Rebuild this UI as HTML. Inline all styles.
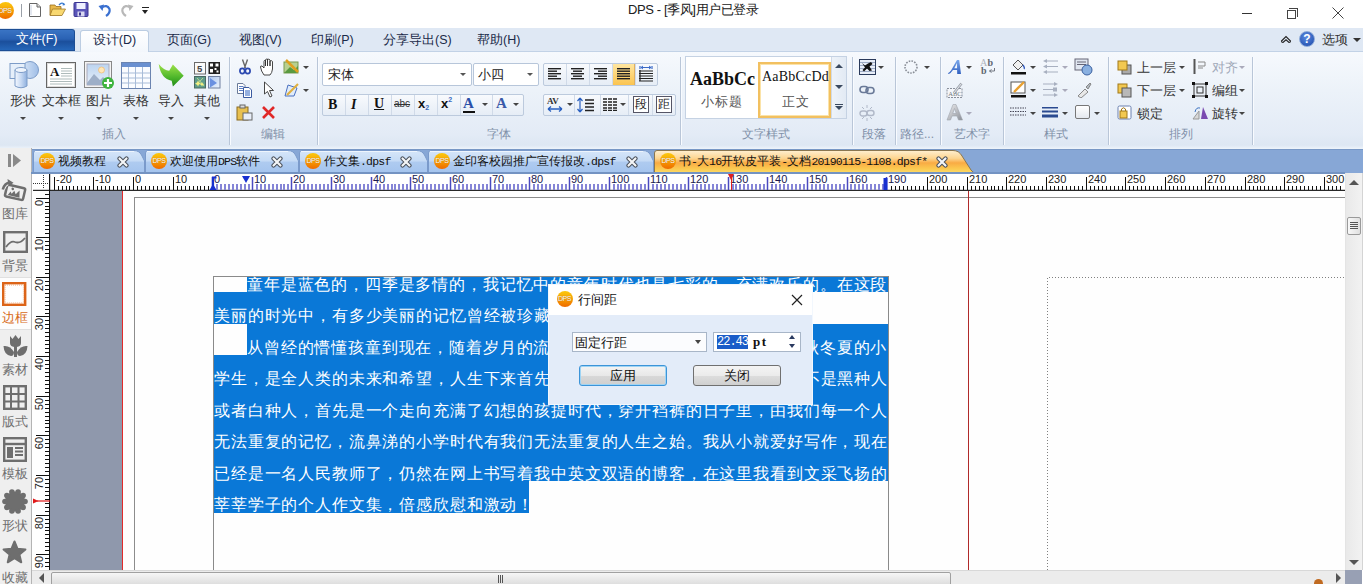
<!DOCTYPE html><html><head><meta charset="utf-8"><style>
html,body{margin:0;padding:0;}
body{width:1363px;height:584px;overflow:hidden;position:relative;background:#fff;font-family:"Liberation Sans",sans-serif;font-size:12px;color:#222;}
div,svg{box-sizing:border-box;}
.a{position:absolute;}
.lbl{position:absolute;color:#8090a8;font-size:12px;line-height:14px;white-space:nowrap;}
.rt{position:absolute;font-size:12px;line-height:14px;color:#2a2a2a;white-space:nowrap;}
.sep{position:absolute;top:57px;width:2px;height:88px;border-left:1px solid #b9c6d8;border-right:1px solid #f8fbff;}
.dd{position:absolute;width:0;height:0;border-left:3px solid transparent;border-right:3px solid transparent;border-top:3px solid #444;}
.ddg{position:absolute;width:0;height:0;border-left:3px solid transparent;border-right:3px solid transparent;border-top:3px solid #aab;}
</style></head><body>
<div style="position:absolute;left:-3.5px;top:1.5px;width:17.0px;height:17.0px;border-radius:50%;background:linear-gradient(#fbc70c 0%,#f8a808 45%,#f28400 75%,#ee6a00 100%);color:#fff;font-size:7px;line-height:17.0px;text-align:center;font-family:'Liberation Sans',sans-serif;letter-spacing:-0.4px;text-shadow:0 0 1px #a85a00">DPS</div>
<div style="position:absolute;left:21px;top:4px;width:1px;height:13px;background:#9aa0a8"></div>
<svg class="a" style="left:28px;top:2px" width="14" height="16" viewBox="0 0 14 16">
<path d="M1.5 1.5 H9 L12.5 5 V14.5 H1.5 Z" fill="#fff" stroke="#666" stroke-width="1"/>
<path d="M9 1.5 V5 H12.5" fill="#ddd" stroke="#666" stroke-width="1"/>
<path d="M3 3 V13" stroke="#c8d0e0" stroke-width="1"/></svg>
<svg class="a" style="left:49px;top:1px" width="18" height="16" viewBox="0 0 18 16">
<path d="M1 4 H6 L7 5.5 H12 V14 H1 Z" fill="#e8b84a" stroke="#9a7020" stroke-width="0.8"/>
<path d="M3.5 8 H16.5 L13 14.5 H1 Z" fill="#f8d870" stroke="#a07a28" stroke-width="0.8"/>
<path d="M10 4 Q13 0.5 15.5 3.5" fill="none" stroke="#3a7ad0" stroke-width="1.3"/>
<path d="M14 1.8 L16.3 4 L13.6 4.6 Z" fill="#3a7ad0"/></svg>
<svg class="a" style="left:73px;top:2px" width="16" height="15" viewBox="0 0 16 15">
<rect x="1" y="0.5" width="14" height="14" rx="1" fill="#5a55b8" stroke="#3a3590"/>
<rect x="3.5" y="1" width="9" height="6" fill="#eef0ff"/>
<rect x="4.5" y="9.5" width="7" height="5" fill="#d8d8f0"/>
<rect x="6" y="10.5" width="2" height="3" fill="#3a3590"/></svg>
<svg class="a" style="left:98px;top:3px" width="14" height="14" viewBox="0 0 14 14">
<path d="M3.5 4.5 Q9 1 11.5 6 Q12.5 10 8 13" fill="none" stroke="#3a70d0" stroke-width="2.2"/>
<path d="M0.5 3 L6 1.5 L4.5 8 Z" fill="#3a70d0"/></svg>
<svg class="a" style="left:120px;top:3px" width="14" height="14" viewBox="0 0 14 14">
<path d="M10.5 4.5 Q5 1 2.5 6 Q1.5 10 6 13" fill="none" stroke="#b8b8b8" stroke-width="2.2"/>
<path d="M13.5 3 L8 1.5 L9.5 8 Z" fill="#b8b8b8"/></svg>
<div style="position:absolute;left:142px;top:7px;width:7px;height:1px;background:#222"></div>
<div class="a" style="left:142px;top:10px;width:0;height:0;border-left:3.5px solid transparent;border-right:3.5px solid transparent;border-top:4px solid #222"></div>
<div style="position:absolute;left:628px;top:2px;white-space:nowrap;font-size:13px;line-height:16px;color:#202020;letter-spacing:-0.4px">DPS - [季风]用户已登录</div>
<div style="position:absolute;left:1242px;top:13px;width:10px;height:1px;background:#333"></div>
<div style="position:absolute;left:1287px;top:10px;width:9px;height:9px;border:1px solid #444"></div>
<div style="position:absolute;left:1289px;top:8px;width:9px;height:9px;border-top:1px solid #444;border-right:1px solid #444"></div>
<svg class="a" style="left:1332px;top:7px" width="12" height="12" viewBox="0 0 12 12"><path d="M0.5 0.5 L11.5 11.5 M11.5 0.5 L0.5 11.5" stroke="#444" stroke-width="1"/></svg>
<div style="position:absolute;left:0px;top:28px;width:1363px;height:24px;background:#dfe8f4"></div>
<div style="position:absolute;left:0px;top:51px;width:1363px;height:1px;background:#c2d2e6"></div>
<div class="a" style="left:0;top:29px;width:75px;height:22px;border-radius:0 3px 0 0;background:linear-gradient(#3a74c4 0%,#2a62b4 45%,#1b4f9c 58%,#2566b8 100%);border:1px solid #1d4e94;border-left:none;color:#fff;font-size:12.5px;line-height:19px;text-align:center;padding-right:1px">文件(F)</div>
<div class="a" style="left:80px;top:30px;width:69px;height:22px;border-radius:3px 3px 0 0;background:linear-gradient(#ffffff,#f3f7fc);border:1px solid #bccde2;border-bottom:none;color:#1a2a48;font-size:12.5px;line-height:19px;text-align:center">设计(D)</div>
<div style="position:absolute;left:167px;top:33px;white-space:nowrap;font-size:12.5px;line-height:15px;color:#1a2a48">页面(G)</div>
<div style="position:absolute;left:239px;top:33px;white-space:nowrap;font-size:12.5px;line-height:15px;color:#1a2a48">视图(V)</div>
<div style="position:absolute;left:311px;top:33px;white-space:nowrap;font-size:12.5px;line-height:15px;color:#1a2a48">印刷(P)</div>
<div style="position:absolute;left:383px;top:33px;white-space:nowrap;font-size:12.5px;line-height:15px;color:#1a2a48">分享导出(S)</div>
<div style="position:absolute;left:477px;top:33px;white-space:nowrap;font-size:12.5px;line-height:15px;color:#1a2a48">帮助(H)</div>
<svg class="a" style="left:1280px;top:34px" width="12" height="10" viewBox="0 0 12 10"><path d="M1.5 7 L6 2.5 L10.5 7 Q10.5 8.5 9 8.5 L6 5.8 L3 8.5 Q1.5 8.5 1.5 7 Z" fill="none" stroke="#222" stroke-width="1.1"/></svg>
<div class="a" style="left:1299px;top:31px;width:16px;height:16px;border-radius:50%;background:radial-gradient(circle at 45% 35%,#5b8be0,#1a46a8);border:1px solid #8aa8d8;color:#fff;font-weight:bold;font-size:12px;line-height:15px;text-align:center">?</div>
<div style="position:absolute;left:1322px;top:32px;white-space:nowrap;font-size:13px;line-height:16px;color:#333">选项</div>
<div class="dd" style="left:1353px;top:38px;border-top-color:#333;border-left-width:4px;border-right-width:4px;border-top-width:4px"></div>
<div style="position:absolute;left:0px;top:52px;width:1363px;height:97px;background:linear-gradient(#f6f9fd 0%,#ecf2f9 40%,#e3ebf6 85%,#dde7f3 96%,#eef4fb 100%)"></div>
<div class="sep" style="left:229px"></div>
<div class="sep" style="left:317px"></div>
<div class="sep" style="left:680px"></div>
<div class="sep" style="left:852px"></div>
<div class="sep" style="left:895px"></div>
<div class="sep" style="left:940px"></div>
<div class="sep" style="left:1003px"></div>
<div class="sep" style="left:1108px"></div>
<div class="sep" style="left:1252px"></div>
<div class="lbl" style="left:102.0px;top:127px;width:24px;text-align:center">插入</div>
<div class="lbl" style="left:261.0px;top:127px;width:24px;text-align:center">编辑</div>
<div class="lbl" style="left:487.0px;top:127px;width:24px;text-align:center">字体</div>
<div class="lbl" style="left:742.0px;top:127px;width:48px;text-align:center">文字样式</div>
<div class="lbl" style="left:862.0px;top:127px;width:24px;text-align:center">段落</div>
<div class="lbl" style="left:900.0px;top:127px;width:34px;text-align:center">路径...</div>
<div class="lbl" style="left:954.0px;top:127px;width:36px;text-align:center">艺术字</div>
<div class="lbl" style="left:1044.0px;top:127px;width:24px;text-align:center">样式</div>
<div class="lbl" style="left:1169.0px;top:127px;width:24px;text-align:center">排列</div>
<svg class="a" style="left:9px;top:60px" width="30" height="30" viewBox="0 0 30 30">
<defs><linearGradient id="gs1" x1="0" x2="1"><stop offset="0" stop-color="#dbe8f8"/><stop offset="1" stop-color="#9fbde6"/></linearGradient>
<linearGradient id="gs2" x1="0" x2="1"><stop offset="0" stop-color="#f4f8ff"/><stop offset="0.5" stop-color="#c8daf3"/><stop offset="1" stop-color="#8fb0de"/></linearGradient></defs>
<circle cx="21" cy="10" r="8.5" fill="url(#gs1)" stroke="#7d9cc8"/>
<rect x="1" y="3.5" width="15" height="15" fill="#e6effa" stroke="#7d9cc8"/>
<path d="M6 10 V26 Q12 29.5 18 26 V10" fill="url(#gs2)" stroke="#7d9cc8"/>
<ellipse cx="12" cy="10" rx="6" ry="2.5" fill="#eef4fc" stroke="#7d9cc8"/></svg>
<svg class="a" style="left:46px;top:62px" width="30" height="27" viewBox="0 0 30 27">
<rect x="0.5" y="0.5" width="29" height="25" fill="#fff" stroke="#666"/>
<rect x="1.5" y="1.5" width="27" height="23" fill="none" stroke="#ddd"/>
<text x="4" y="14" font-family="Liberation Serif" font-size="13" font-weight="bold" fill="#111">A</text>
<path d="M15 6.5 H26 M15 9 H26 M15 11.5 H26 M15 14 H26 M4 17 H26 M4 19.5 H26 M4 22 H26" stroke="#9aa" stroke-width="0.8"/></svg>
<svg class="a" style="left:84px;top:61px" width="31" height="29" viewBox="0 0 31 29">
<defs><linearGradient id="gp" x1="0" y1="0" x2="0" y2="1"><stop offset="0" stop-color="#bcd4f0"/><stop offset="1" stop-color="#e8f0fa"/></linearGradient></defs>
<rect x="0.5" y="0.5" width="27" height="26" fill="#f4f4f4" stroke="#888"/>
<rect x="3" y="3" width="22" height="21" fill="url(#gp)" stroke="#aab"/>
<circle cx="17.5" cy="9" r="3" fill="#ffe7b8" stroke="#f0b060" stroke-width="0.6"/>
<path d="M3 22 L10 13 L16 19 L19 16 L25 22 V24 H3 Z" fill="#9eafc8"/>
<circle cx="24" cy="22" r="6" fill="#3eb43e"/>
<path d="M24 18 V26 M20 22 H28" stroke="#fff" stroke-width="2.2"/></svg>
<svg class="a" style="left:121px;top:62px" width="30" height="27" viewBox="0 0 30 27">
<rect x="0.5" y="0.5" width="29" height="26" fill="#fafcff" stroke="#6b84b0"/>
<rect x="1" y="1" width="28" height="4" fill="#6a90d0"/>
<path d="M1 11 H29 M1 16 H29 M1 21 H29 M7.5 5 V26 M14.5 5 V26 M21.5 5 V26" stroke="#a8bcd8" stroke-width="1"/></svg>
<svg class="a" style="left:155px;top:56px" width="32" height="34" viewBox="0 0 32 34">
<defs><linearGradient id="ga" x1="0" y1="0" x2="0" y2="1"><stop offset="0" stop-color="#9ee24a"/><stop offset="0.6" stop-color="#4cb52a"/><stop offset="1" stop-color="#1f8a18"/></linearGradient></defs>
<path d="M3.7 8 Q9 14.5 14.2 14.8 L17.9 8.6 L28.7 19.8 L17.9 30.6 L16.7 24.7 Q6 23 3.7 8 Z" fill="url(#ga)"/></svg>
<svg class="a" style="left:193px;top:61px" width="28" height="28" viewBox="0 0 28 28">
<defs><linearGradient id="gpl" x1="0" y1="0" x2="1" y2="1"><stop offset="0" stop-color="#a8c4f0"/><stop offset="1" stop-color="#eef4fc"/></linearGradient></defs>
<rect x="1.5" y="1.5" width="11" height="11.5" fill="#fafafa" stroke="#6a6a6a"/><text x="4" y="11" font-size="9.5" font-weight="bold" font-family="Liberation Sans" fill="#444">5</text>
<rect x="15.5" y="1" width="11.5" height="12" fill="#222"/>
<path d="M17 2.5 h3 v3 h-3z M22.5 2.5 h3 v3 h-3z M17 8 h3 v3.5 h-3z M21.5 7 h2 v2 h-2z M23.5 9.5 h2 v2 h-2z" fill="#fff"/>
<rect x="1.5" y="15.5" width="11" height="11.5" fill="#5e9c8a" stroke="#4a6a60"/><path d="M4 17 L11 25 M10 17 L3.5 24" stroke="#b8d890" stroke-width="1"/>
<path d="M5 19.5 l1 2 2 1 -2 1 -1 2 -1 -2 -2 -1 2 -1z M9 21 l0.8 1.5 1.5 0.8 -1.5 0.8 -0.8 1.5 -0.8 -1.5 -1.5 -0.8 1.5 -0.8z" fill="#f4f080"/>
<rect x="15.5" y="15.5" width="11.5" height="11.5" fill="url(#gpl)" stroke="#7080a0"/><path d="M17 17 L24 22 L17 26.5 Z" fill="#6a90e0"/></svg>
<div class="rt" style="left:10.0px;top:93px;width:26px;text-align:center;font-size:13px;line-height:15px;color:#333">形状</div>
<div class="dd" style="left:20px;top:117px"></div>
<div class="rt" style="left:41.5px;top:93px;width:39px;text-align:center;font-size:13px;line-height:15px;color:#333">文本框</div>
<div class="dd" style="left:58px;top:117px"></div>
<div class="rt" style="left:86.0px;top:93px;width:26px;text-align:center;font-size:13px;line-height:15px;color:#333">图片</div>
<div class="dd" style="left:96px;top:117px"></div>
<div class="rt" style="left:123.0px;top:93px;width:26px;text-align:center;font-size:13px;line-height:15px;color:#333">表格</div>
<div class="dd" style="left:133px;top:117px"></div>
<div class="rt" style="left:158.0px;top:93px;width:26px;text-align:center;font-size:13px;line-height:15px;color:#333">导入</div>
<div class="dd" style="left:168px;top:117px"></div>
<div class="rt" style="left:194.0px;top:93px;width:26px;text-align:center;font-size:13px;line-height:15px;color:#333">其他</div>
<div class="dd" style="left:204px;top:117px"></div>
<svg class="a" style="left:238px;top:59px" width="14" height="16" viewBox="0 0 14 16">
<path d="M4.5 0.5 L7.5 9 M9.5 0.5 L6.5 9" stroke="#666" stroke-width="1.4"/>
<ellipse cx="4.3" cy="12" rx="2.4" ry="2.6" fill="none" stroke="#2a48b0" stroke-width="1.7"/><ellipse cx="9.7" cy="12" rx="2.4" ry="2.6" fill="none" stroke="#2a48b0" stroke-width="1.7"/></svg>
<svg class="a" style="left:259px;top:58px" width="18" height="18" viewBox="0 0 18 18">
<path d="M5 17 Q2 13 1.5 9 Q1.5 7.5 3 8 L5 10 V3.5 Q5 2 6.5 2.5 V8 V2 Q7 0.5 8.5 1 V8 V1.5 Q10 0.5 11 2 V8 V3 Q12.5 2 13.5 3.5 V11 Q13 15 11 17 Z" fill="#fff" stroke="#333" stroke-width="0.9"/></svg>
<svg class="a" style="left:283px;top:59px" width="17" height="16" viewBox="0 0 17 16">
<rect x="1" y="3" width="14" height="11" fill="#b8d090" stroke="#7a9a50"/><path d="M1 14 L7 8 L11 11 L15 7 V14Z" fill="#5a9a40"/>
<path d="M3 1 L15 13" stroke="#e0a020" stroke-width="2.5"/></svg>
<div class="dd" style="left:303px;top:66px"></div>
<svg class="a" style="left:236px;top:82px" width="17" height="16" viewBox="0 0 17 16">
<path d="M1.5 1.5 H7 L9 3.5 V11.5 H1.5 Z" fill="#fff" stroke="#6a7a98"/><path d="M3 4.5 H7.5 M3 6.5 H7.5 M3 8.5 H7.5" stroke="#4a70c0" stroke-width="0.9"/>
<path d="M7.5 5.5 H13 L15.5 8 V15.5 H7.5 Z" fill="#fff" stroke="#3a5aa0"/><path d="M9 9 H14 M9 11 H14 M9 13 H14" stroke="#2a60c0" stroke-width="1"/></svg>
<svg class="a" style="left:263px;top:81px" width="12" height="17" viewBox="0 0 12 17">
<path d="M1.5 1 V13 L4.5 10.5 L7 16 L9 15 L6.5 9.5 L10.5 9.5 Z" fill="#fff" stroke="#333" stroke-width="0.9"/></svg>
<svg class="a" style="left:283px;top:82px" width="17" height="16" viewBox="0 0 17 16">
<path d="M2 14 L5 3 L14 6 L11 14 Z" fill="#e0ecfa" stroke="#4a70c0"/><path d="M4 13 L15 2" stroke="#e0b040" stroke-width="2.2"/></svg>
<div class="dd" style="left:303px;top:89px"></div>
<svg class="a" style="left:236px;top:104px" width="17" height="17" viewBox="0 0 17 17">
<rect x="1" y="3" width="11" height="13" fill="#e8c050" stroke="#8a6a20"/><rect x="4" y="1" width="5" height="3" fill="#ddd" stroke="#666"/>
<rect x="7" y="9" width="9" height="7" fill="#e8eef8" stroke="#666"/></svg>
<svg class="a" style="left:261px;top:105px" width="15" height="15" viewBox="0 0 15 15"><path d="M2 2 L13 13 M13 2 L2 13" stroke="#e02828" stroke-width="2.6"/></svg>
<div class="a" style="left:322px;top:63px;width:150px;height:23px;background:#fff;border:1px solid #b7c6da;border-radius:2px"></div>
<div style="position:absolute;left:328px;top:67px;white-space:nowrap;font-size:13px;line-height:15px;color:#222">宋体</div>
<div class="dd" style="left:460px;top:73px;border-top-color:#555"></div>
<div class="a" style="left:473px;top:63px;width:66px;height:23px;background:#fff;border:1px solid #b7c6da;border-radius:2px"></div>
<div style="position:absolute;left:478px;top:67px;white-space:nowrap;font-size:13px;line-height:15px;color:#222">小四</div>
<div class="dd" style="left:527px;top:73px;border-top-color:#555"></div>
<div class="a" style="left:322px;top:94px;width:202px;height:22px;background:linear-gradient(#f8fafd,#e6edf6);border:1px solid #bccadd;border-radius:2px"></div>
<div style="position:absolute;left:345px;top:95px;width:1px;height:20px;background:#d0dae8"></div>
<div style="position:absolute;left:368px;top:95px;width:1px;height:20px;background:#d0dae8"></div>
<div style="position:absolute;left:391px;top:95px;width:1px;height:20px;background:#d0dae8"></div>
<div style="position:absolute;left:414px;top:95px;width:1px;height:20px;background:#d0dae8"></div>
<div style="position:absolute;left:437px;top:95px;width:1px;height:20px;background:#d0dae8"></div>
<div style="position:absolute;left:460px;top:95px;width:1px;height:20px;background:#d0dae8"></div>
<div style="position:absolute;left:492px;top:95px;width:1px;height:20px;background:#d0dae8"></div>
<div style="position:absolute;left:328px;top:96px;white-space:nowrap;font-family:'Liberation Serif',serif;font-weight:bold;font-size:14px;line-height:17px;color:#111">B</div>
<div style="position:absolute;left:351px;top:96px;white-space:nowrap;font-family:'Liberation Serif',serif;font-style:italic;font-weight:bold;font-size:14px;line-height:17px;color:#111">I</div>
<div style="position:absolute;left:374px;top:95px;white-space:nowrap;font-family:'Liberation Serif',serif;font-weight:bold;font-size:14px;line-height:17px;color:#111;text-decoration:underline">U</div>
<div style="position:absolute;left:394px;top:98px;white-space:nowrap;font-family:'Liberation Sans',sans-serif;font-size:10px;line-height:12px;color:#333;text-decoration:line-through">abc</div>
<div style="position:absolute;left:418px;top:97px;white-space:nowrap;font-weight:bold;font-size:13px;line-height:14px;color:#111">x<span style='font-size:7px;color:#3a6ac0;vertical-align:-2px'>2</span></div>
<div style="position:absolute;left:441px;top:97px;white-space:nowrap;font-weight:bold;font-size:13px;line-height:14px;color:#111">x<span style='font-size:7px;color:#3a6ac0;position:relative;top:-6px'>2</span></div>
<div style="position:absolute;left:463px;top:95px;white-space:nowrap;font-family:'Liberation Serif',serif;font-weight:bold;font-size:15px;line-height:16px;color:#2a50a8">A</div>
<div style="position:absolute;left:463px;top:111px;width:12px;height:2px;background:#111"></div>
<div class="dd" style="left:482px;top:103px"></div>
<div style="position:absolute;left:496px;top:95px;white-space:nowrap;font-family:'Liberation Serif',serif;font-weight:bold;font-size:15px;line-height:17px;color:#3a5aa8">A</div>
<div class="dd" style="left:513px;top:103px"></div>
<div class="a" style="left:543px;top:63px;width:115px;height:23px;background:linear-gradient(#f8fafd,#e6edf6);border:1px solid #bccadd;border-radius:2px"></div>
<div style="position:absolute;left:612px;top:64px;width:23px;height:21px;background:linear-gradient(#ffe6a0,#fbc450);border-left:1px solid #e0b060;border-right:1px solid #e0b060"></div>
<div style="position:absolute;left:566px;top:64px;width:1px;height:21px;background:#d0dae8"></div>
<div style="position:absolute;left:589px;top:64px;width:1px;height:21px;background:#d0dae8"></div>
<div style="position:absolute;left:612px;top:64px;width:1px;height:21px;background:#d0dae8"></div>
<div style="position:absolute;left:635px;top:64px;width:1px;height:21px;background:#d0dae8"></div>
<svg class="a" style="left:548px;top:68px" width="14" height="13" viewBox="0 0 14 13"><rect x="0" y="0.0" width="13" height="1.4" fill="#222"/><rect x="0" y="2.5" width="9" height="1.4" fill="#222"/><rect x="0" y="5.0" width="13" height="1.4" fill="#222"/><rect x="0" y="7.5" width="9" height="1.4" fill="#222"/><rect x="0" y="10.0" width="13" height="1.4" fill="#222"/></svg>
<svg class="a" style="left:571px;top:68px" width="14" height="13" viewBox="0 0 14 13"><rect x="0" y="0.0" width="13" height="1.4" fill="#222"/><rect x="2" y="2.5" width="9" height="1.4" fill="#222"/><rect x="0" y="5.0" width="13" height="1.4" fill="#222"/><rect x="2" y="7.5" width="9" height="1.4" fill="#222"/><rect x="0" y="10.0" width="13" height="1.4" fill="#222"/></svg>
<svg class="a" style="left:594px;top:68px" width="14" height="13" viewBox="0 0 14 13"><rect x="0" y="0.0" width="13" height="1.4" fill="#222"/><rect x="4" y="2.5" width="9" height="1.4" fill="#222"/><rect x="0" y="5.0" width="13" height="1.4" fill="#222"/><rect x="4" y="7.5" width="9" height="1.4" fill="#222"/><rect x="0" y="10.0" width="13" height="1.4" fill="#222"/></svg>
<svg class="a" style="left:617px;top:68px" width="14" height="13" viewBox="0 0 14 13"><rect x="0" y="0.0" width="13" height="1.4" fill="#222"/><rect x="0" y="2.5" width="13" height="1.4" fill="#222"/><rect x="0" y="5.0" width="13" height="1.4" fill="#222"/><rect x="0" y="7.5" width="13" height="1.4" fill="#222"/><rect x="0" y="10.0" width="13" height="1.4" fill="#222"/></svg>
<svg class="a" style="left:638px;top:65px" width="16" height="17" viewBox="0 0 16 17">
<path d="M2 1 V4 M14 1 V4 M3 2.5 H13" stroke="#3a6ac8" stroke-width="1.2"/><path d="M3 2.5 L5 1 M3 2.5 L5 4 M13 2.5 L11 1 M13 2.5 L11 4" stroke="#3a6ac8" stroke-width="1"/>
<path d="M1 6 H15 M1 8.5 H15 M1 11 H15 M1 13.5 H15 M1 16 H15 M2 5 V16" stroke="#222" stroke-width="1.2"/></svg>
<div class="a" style="left:543px;top:94px;width:133px;height:22px;background:linear-gradient(#f8fafd,#e6edf6);border:1px solid #bccadd;border-radius:2px"></div>
<div style="position:absolute;left:574px;top:95px;width:1px;height:20px;background:#d0dae8"></div>
<div style="position:absolute;left:600px;top:95px;width:1px;height:20px;background:#d0dae8"></div>
<div style="position:absolute;left:628px;top:95px;width:1px;height:20px;background:#d0dae8"></div>
<div style="position:absolute;left:652px;top:95px;width:1px;height:20px;background:#d0dae8"></div>
<svg class="a" style="left:546px;top:96px" width="20" height="18" viewBox="0 0 20 18">
<text x="1" y="8" font-family="Liberation Serif" font-weight="bold" font-size="9" fill="#333">AV</text>
<path d="M2 13 H16 M2 13 L5 10.5 M2 13 L5 15.5 M16 13 L13 10.5 M16 13 L13 15.5" stroke="#2a60c0" stroke-width="1.3" fill="none"/></svg>
<div class="dd" style="left:567px;top:103px"></div>
<svg class="a" style="left:577px;top:96px" width="18" height="18" viewBox="0 0 18 18">
<path d="M3 2 V16 M3 2 L0.5 5 M3 2 L5.5 5 M3 16 L0.5 13 M3 16 L5.5 13" stroke="#2a60c0" stroke-width="1.2" fill="none"/>
<path d="M8 4 H17 M8 7.5 H17 M8 11 H17 M8 14.5 H17" stroke="#222" stroke-width="1.3"/></svg>
<svg class="a" style="left:603px;top:98px" width="14" height="13" viewBox="0 0 14 13">
<path d="M0 1 H14 M0 4 H14 M0 7 H14 M0 10 H14 M0 12.5 H14" stroke="#222" stroke-width="1.3"/><path d="M4.5 0 V13 M9.5 0 V13" stroke="#f2f5fa" stroke-width="1"/></svg>
<div class="dd" style="left:620px;top:103px"></div>
<div class="a" style="left:633px;top:96px;width:16px;height:17px;border:1px solid #556;background:#fff;font-size:12px;line-height:15px;text-align:center;color:#222">段</div>
<div class="a" style="left:656px;top:96px;width:16px;height:17px;border:1px solid #556;background:#fff;font-size:12px;line-height:15px;text-align:center;color:#222">距</div>
<div class="a" style="left:685px;top:56px;width:162px;height:63px;background:#fff;border:1px solid #c5d2e3"></div>
<div style="position:absolute;left:831px;top:57px;width:15px;height:61px;background:linear-gradient(90deg,#eef3f9,#e2eaf4);border-left:1px solid #d0dae8"></div>
<div class="a" style="left:835px;top:64px;width:0;height:0;border-left:4px solid transparent;border-right:4px solid transparent;border-bottom:4px solid #3a4a60"></div>
<div class="dd" style="left:835px;top:85px;border-left-width:4px;border-right-width:4px;border-top-width:4px;border-top-color:#3a4a60"></div>
<div style="position:absolute;left:835px;top:104px;width:8px;height:1px;background:#3a4a60"></div>
<div class="dd" style="left:835px;top:106px;border-left-width:4px;border-right-width:4px;border-top-width:4px;border-top-color:#3a4a60"></div>
<div style="position:absolute;left:690px;top:69px;white-space:nowrap;font-family:'Liberation Serif',serif;font-weight:bold;font-size:18px;line-height:20px;color:#111;letter-spacing:0px">AaBbCc</div>
<div style="position:absolute;left:701px;top:94px;white-space:nowrap;font-size:13px;line-height:15px;color:#555;letter-spacing:1px">小标题</div>
<div class="a" style="left:758px;top:62px;width:73px;height:56px;border:2px solid #f2c060;box-shadow:inset 0 0 0 1px #fbe3a8;background:#fff"></div>
<div style="position:absolute;left:762px;top:69px;white-space:nowrap;font-family:'Liberation Serif',serif;font-size:14px;line-height:16px;color:#111;letter-spacing:0.2px">AaBbCcDd</div>
<div style="position:absolute;left:782px;top:94px;white-space:nowrap;font-size:13px;line-height:15px;color:#555;letter-spacing:1px">正文</div>
<svg class="a" style="left:859px;top:59px" width="17" height="16" viewBox="0 0 17 16">
<rect x="0.5" y="0.5" width="16" height="15" fill="#e8eef8" stroke="#2a3a5a"/><path d="M1 3.5 H16 M1 6.5 H16 M1 9.5 H16 M1 12.5 H16" stroke="#8a9ab8" stroke-width="0.8"/>
<path d="M3 4 L6 6.5 L9 4.5 L12 3 L13.5 5 L10.5 7.5 L13 11.5 L10.5 12 L8 9.5 L5 12.5 L3.5 11 L6 8.5 Z" fill="#111"/></svg>
<div class="dd" style="left:878px;top:66px"></div>
<svg class="a" style="left:859px;top:85px" width="16" height="10" viewBox="0 0 16 10">
<rect x="1" y="1.5" width="8" height="6" rx="3" fill="none" stroke="#6a7a98" stroke-width="1.6"/><rect x="7" y="2.5" width="8" height="6" rx="3" fill="none" stroke="#6a7a98" stroke-width="1.6"/></svg>
<svg class="a" style="left:859px;top:105px" width="16" height="16" viewBox="0 0 16 16">
<path d="M8 0 V3 M8 13 V16 M3 2 L5 4 M13 2 L11 4 M3 14 L5 12 M13 14 L11 12" stroke="#b0b8c8" stroke-width="1"/>
<rect x="1" y="6" width="7" height="5" rx="2.5" fill="none" stroke="#b0b8c8" stroke-width="1.4"/><rect x="8" y="5.5" width="7" height="5" rx="2.5" fill="none" stroke="#b0b8c8" stroke-width="1.4"/></svg>
<svg class="a" style="left:903px;top:59px" width="16" height="16" viewBox="0 0 16 16">
<circle cx="8" cy="8" r="6" fill="none" stroke="#8a8f98" stroke-width="1.6" stroke-dasharray="1.6 1.2"/></svg>
<div class="dd" style="left:924px;top:66px"></div>
<svg class="a" style="left:947px;top:59px" width="16" height="16" viewBox="0 0 16 16">
<defs><linearGradient id="gaa" x1="0" y1="0" x2="0" y2="1"><stop offset="0" stop-color="#7aa8ec"/><stop offset="1" stop-color="#3060c0"/></linearGradient></defs>
<path d="M10 1 L12.2 1 L14 15 L10.2 15 L10.1 11 L6 11 L3.5 14 Q2 15.5 0.8 14.2 Q2.5 13.5 4 11.5 Z M10.1 9.2 L10 4 L7.3 9.2 Z" fill="url(#gaa)" fill-rule="evenodd"/></svg>
<div class="dd" style="left:966px;top:66px"></div>
<svg class="a" style="left:980px;top:58px" width="17" height="17" viewBox="0 0 17 17">
<text x="0" y="8" font-family="Liberation Serif" font-size="10" fill="#b0b4bc">A</text><text x="7.5" y="8" font-family="Liberation Serif" font-weight="bold" font-size="10" fill="#606670">b</text>
<text x="1" y="16" font-family="Liberation Serif" font-weight="bold" font-size="10" fill="#606670">b</text><path d="M14.5 10 V13 H9.5 M9.5 13 L11.5 11.5 M9.5 13 L11.5 14.5" stroke="#707680" fill="none" stroke-width="1"/></svg>
<svg class="a" style="left:946px;top:81px" width="18" height="18" viewBox="0 0 18 18">
<rect x="1" y="7.5" width="15" height="9" fill="#f4f6fa" stroke="#8a909c" stroke-dasharray="2 1"/><text x="2.2" y="15" font-family="Liberation Serif" font-size="6.5" fill="#707680">ABC</text>
<path d="M8 12 L15.5 2.5" stroke="#9aa0aa" stroke-width="2.6"/><path d="M8 12 L15.5 2.5" stroke="#e8eaee" stroke-width="1"/></svg>
<svg class="a" style="left:946px;top:104px" width="18" height="17" viewBox="0 0 18 17">
<defs><linearGradient id="gag" x1="0" y1="0" x2="1" y2="1"><stop offset="0" stop-color="#f0f0f2"/><stop offset="1" stop-color="#8a8e96"/></linearGradient></defs>
<path d="M7 0.5 L10 0.5 L16.5 16 L12.5 16 L11 12 L6 12 L4.5 16 L1 16 Z M8.5 4.5 L6.8 9.5 L10.2 9.5 Z" fill="url(#gag)" stroke="#a0a4ac" stroke-width="0.6" fill-rule="evenodd"/></svg>
<div class="ddg" style="left:966px;top:112px"></div>
<svg class="a" style="left:1010px;top:58px" width="17" height="17" viewBox="0 0 17 17">
<path d="M3 7 L8 2 L13 7 L8 12 Z" fill="#f0f0f0" stroke="#555"/><path d="M13 7 Q15 10 14 11" stroke="#3a60c0" fill="none" stroke-width="1.5"/>
<rect x="1" y="14" width="15" height="2.5" fill="#111"/></svg>
<div class="dd" style="left:1030px;top:66px"></div>
<svg class="a" style="left:1010px;top:81px" width="17" height="17" viewBox="0 0 17 17">
<rect x="1" y="1" width="14" height="11" fill="#fff" stroke="#555"/><path d="M4 11 L14 1" stroke="#e8a030" stroke-width="2.3"/>
<rect x="1" y="14" width="15" height="2.5" fill="#111"/></svg>
<div class="dd" style="left:1030px;top:89px"></div>
<svg class="a" style="left:1010px;top:107px" width="16" height="10" viewBox="0 0 16 10">
<path d="M0 1 H16 M0 4.5 H16 M0 8 H16" stroke="#445" stroke-width="1" stroke-dasharray="1.5 1"/></svg>
<div class="dd" style="left:1030px;top:112px"></div>
<svg class="a" style="left:1042px;top:59px" width="17" height="15" viewBox="0 0 17 15">
<path d="M3 2 H16 M3 7.5 H16 M3 13 H16" stroke="#a8b0c0" stroke-width="1.2"/><path d="M1 2 L5 0 V4 Z M1 7.5 L5 5.5 V9.5 Z M1 13 L5 11 V15 Z" fill="#a8b0c0"/></svg>
<div class="ddg" style="left:1062px;top:66px"></div>
<svg class="a" style="left:1042px;top:82px" width="17" height="15" viewBox="0 0 17 15">
<path d="M1 2 H14 M1 7.5 H14 M1 13 H14" stroke="#a8b0c0" stroke-width="1.2"/><path d="M16 2 L12 0 V4 Z M11 5.5 h4 v4 h-4z M16 13 L12 11 V15 Z" fill="#a8b0c0"/></svg>
<div class="ddg" style="left:1062px;top:89px"></div>
<svg class="a" style="left:1042px;top:107px" width="16" height="11" viewBox="0 0 16 11">
<rect x="0" y="0" width="16" height="1.5" fill="#2a4a90"/><rect x="0" y="3.5" width="16" height="2" fill="#2a4a90"/><rect x="0" y="7.5" width="16" height="3" fill="#2a4a90"/></svg>
<div class="dd" style="left:1062px;top:112px"></div>
<svg class="a" style="left:1074px;top:58px" width="19" height="18" viewBox="0 0 19 18">
<rect x="1" y="1" width="13" height="11" fill="#e0e6f0" stroke="#667"/><path d="M3 4 H12 M3 6.5 H12" stroke="#667"/><circle cx="13" cy="12" r="5" fill="#8ab0e0" stroke="#3a60a0"/></svg>
<svg class="a" style="left:1076px;top:81px" width="16" height="17" viewBox="0 0 16 17">
<path d="M2 15 L9 8 L12 11 L5 17 Z" fill="#e8e8e8" stroke="#888"/><path d="M10 6 L14 2 L15 3 L12 8 Z" fill="#b0b8c0" stroke="#888"/></svg>
<div class="a" style="left:1075px;top:105px;width:15px;height:14px;border:1px solid #777;border-radius:2px;background:linear-gradient(#fff,#e4e8ee)"></div>
<div class="dd" style="left:1094px;top:112px"></div>
<svg class="a" style="left:1117px;top:60px" width="15" height="15" viewBox="0 0 15 15"><rect x="5" y="5" width="9" height="9" fill="#aaa" stroke="#555"/><rect x="1" y="1" width="9" height="9" fill="#f2c850" stroke="#a07818"/></svg>
<div style="position:absolute;left:1137px;top:60px;white-space:nowrap;font-size:13px;line-height:15px;color:#333">上一层</div>
<div class="dd" style="left:1179px;top:66px"></div>
<svg class="a" style="left:1117px;top:83px" width="15" height="15" viewBox="0 0 15 15"><rect x="1" y="1" width="9" height="9" fill="#f2c850" stroke="#a07818"/><rect x="5" y="5" width="9" height="9" fill="#b8b8b8" stroke="#555"/></svg>
<div style="position:absolute;left:1137px;top:83px;white-space:nowrap;font-size:13px;line-height:15px;color:#333">下一层</div>
<div class="dd" style="left:1179px;top:89px"></div>
<svg class="a" style="left:1117px;top:105px" width="15" height="15" viewBox="0 0 15 15"><rect x="1" y="1" width="13" height="13" rx="1.5" fill="#fff" stroke="#6a80b0"/><rect x="3" y="6" width="7" height="7" fill="#f2c850" stroke="#a07818"/><path d="M4.5 6 V4 Q6.5 1.5 8.5 4 V6" fill="none" stroke="#a07818"/></svg>
<div style="position:absolute;left:1137px;top:106px;white-space:nowrap;font-size:13px;line-height:15px;color:#333">锁定</div>
<svg class="a" style="left:1193px;top:59px" width="14" height="15" viewBox="0 0 14 15"><path d="M1.5 0 V15" stroke="#555" stroke-width="2"/><path d="M5 3 H12 V7 H5 M5 9 H10" stroke="#888" fill="none"/></svg>
<div style="position:absolute;left:1212px;top:60px;white-space:nowrap;font-size:13px;line-height:15px;color:#a0a8b8">对齐</div>
<div class="ddg" style="left:1239px;top:66px"></div>
<svg class="a" style="left:1192px;top:82px" width="16" height="16" viewBox="0 0 16 16"><rect x="2" y="2" width="12" height="12" fill="none" stroke="#333"/><rect x="5" y="5" width="6" height="6" fill="none" stroke="#333"/>
<rect x="0" y="0" width="3" height="3" fill="#111"/><rect x="13" y="0" width="3" height="3" fill="#111"/><rect x="0" y="13" width="3" height="3" fill="#111"/><rect x="13" y="13" width="3" height="3" fill="#111"/></svg>
<div style="position:absolute;left:1212px;top:83px;white-space:nowrap;font-size:13px;line-height:15px;color:#333">编组</div>
<div class="dd" style="left:1239px;top:89px"></div>
<svg class="a" style="left:1192px;top:106px" width="17" height="14" viewBox="0 0 17 14"><path d="M1 13 L7 5 V13 Z" fill="#d8d8d8" stroke="#999"/><path d="M9 13 L11 1 L16 13 Z" fill="#7a4ab0"/><path d="M3 6 Q4 1 8 2" stroke="#3a70c0" fill="none"/></svg>
<div style="position:absolute;left:1212px;top:106px;white-space:nowrap;font-size:13px;line-height:15px;color:#333">旋转</div>
<div class="dd" style="left:1239px;top:112px"></div>
<div style="position:absolute;left:31px;top:149px;width:1332px;height:24px;background:#87a7d6;border-top:1px solid #7898c6"></div>
<svg class="a" style="left:33px;top:150px" width="112" height="23" viewBox="0 0 112 23"><defs><linearGradient id="tg33" x1="0" y1="0" x2="0" y2="1"><stop offset="0" stop-color="#d6e6f9"/><stop offset="0.48" stop-color="#c4daf5"/><stop offset="0.5" stop-color="#afcbf0"/><stop offset="1" stop-color="#a4c4ee"/></linearGradient></defs><path d="M0.5 23 V3 Q0.5 0.5 3 0.5 H101 Q106 0.5 108.5 5 L111.5 11 V23 Z" fill="url(#tg33)" stroke="#7a9acb" stroke-width="1"/><path d="M2 1.5 H101" stroke="#eef5fd" stroke-width="1"/></svg>
<div style="position:absolute;left:39px;top:153px;width:16px;height:16px;border-radius:50%;background:linear-gradient(#fbc70c 0%,#f8a808 45%,#f28400 75%,#ee6a00 100%);color:#fff;font-size:7px;line-height:16px;text-align:center;font-family:'Liberation Sans',sans-serif;letter-spacing:-0.4px;text-shadow:0 0 1px #a85a00">DPS</div>
<div style="position:absolute;left:58px;top:154px;white-space:nowrap;font-size:12px;line-height:14px;color:#111;letter-spacing:0px">视频教程</div>
<svg class="a" style="left:116.5px;top:156px" width="12" height="12" viewBox="0 0 12 12"><path d="M2.5 2.5 L9.5 9.5 M9.5 2.5 L2.5 9.5" stroke="#4a505a" stroke-width="4.2" stroke-linecap="round"/><path d="M2.5 2.5 L9.5 9.5 M9.5 2.5 L2.5 9.5" stroke="#f4f6f8" stroke-width="2.2" stroke-linecap="round"/></svg>
<svg class="a" style="left:145px;top:150px" width="154" height="23" viewBox="0 0 154 23"><defs><linearGradient id="tg145" x1="0" y1="0" x2="0" y2="1"><stop offset="0" stop-color="#d6e6f9"/><stop offset="0.48" stop-color="#c4daf5"/><stop offset="0.5" stop-color="#afcbf0"/><stop offset="1" stop-color="#a4c4ee"/></linearGradient></defs><path d="M0.5 23 V3 Q0.5 0.5 3 0.5 H143 Q148 0.5 150.5 5 L153.5 11 V23 Z" fill="url(#tg145)" stroke="#7a9acb" stroke-width="1"/><path d="M2 1.5 H143" stroke="#eef5fd" stroke-width="1"/></svg>
<div style="position:absolute;left:151px;top:153px;width:16px;height:16px;border-radius:50%;background:linear-gradient(#fbc70c 0%,#f8a808 45%,#f28400 75%,#ee6a00 100%);color:#fff;font-size:7px;line-height:16px;text-align:center;font-family:'Liberation Sans',sans-serif;letter-spacing:-0.4px;text-shadow:0 0 1px #a85a00">DPS</div>
<div style="position:absolute;left:170px;top:154px;white-space:nowrap;font-size:12px;line-height:14px;color:#111;letter-spacing:0px">欢迎使用<span style="font-family:'Liberation Mono',monospace;font-size:11.5px;letter-spacing:-0.8px">DPS</span>软件</div>
<svg class="a" style="left:270.5px;top:156px" width="12" height="12" viewBox="0 0 12 12"><path d="M2.5 2.5 L9.5 9.5 M9.5 2.5 L2.5 9.5" stroke="#4a505a" stroke-width="4.2" stroke-linecap="round"/><path d="M2.5 2.5 L9.5 9.5 M9.5 2.5 L2.5 9.5" stroke="#f4f6f8" stroke-width="2.2" stroke-linecap="round"/></svg>
<svg class="a" style="left:299px;top:150px" width="129" height="23" viewBox="0 0 129 23"><defs><linearGradient id="tg299" x1="0" y1="0" x2="0" y2="1"><stop offset="0" stop-color="#d6e6f9"/><stop offset="0.48" stop-color="#c4daf5"/><stop offset="0.5" stop-color="#afcbf0"/><stop offset="1" stop-color="#a4c4ee"/></linearGradient></defs><path d="M0.5 23 V3 Q0.5 0.5 3 0.5 H118 Q123 0.5 125.5 5 L128.5 11 V23 Z" fill="url(#tg299)" stroke="#7a9acb" stroke-width="1"/><path d="M2 1.5 H118" stroke="#eef5fd" stroke-width="1"/></svg>
<div style="position:absolute;left:305px;top:153px;width:16px;height:16px;border-radius:50%;background:linear-gradient(#fbc70c 0%,#f8a808 45%,#f28400 75%,#ee6a00 100%);color:#fff;font-size:7px;line-height:16px;text-align:center;font-family:'Liberation Sans',sans-serif;letter-spacing:-0.4px;text-shadow:0 0 1px #a85a00">DPS</div>
<div style="position:absolute;left:324px;top:154px;white-space:nowrap;font-size:12px;line-height:14px;color:#111;letter-spacing:0px">作文集<span style="font-family:'Liberation Mono',monospace;font-size:11.5px;letter-spacing:-0.8px">.dpsf</span></div>
<svg class="a" style="left:399.5px;top:156px" width="12" height="12" viewBox="0 0 12 12"><path d="M2.5 2.5 L9.5 9.5 M9.5 2.5 L2.5 9.5" stroke="#4a505a" stroke-width="4.2" stroke-linecap="round"/><path d="M2.5 2.5 L9.5 9.5 M9.5 2.5 L2.5 9.5" stroke="#f4f6f8" stroke-width="2.2" stroke-linecap="round"/></svg>
<svg class="a" style="left:428px;top:150px" width="226" height="23" viewBox="0 0 226 23"><defs><linearGradient id="tg428" x1="0" y1="0" x2="0" y2="1"><stop offset="0" stop-color="#d6e6f9"/><stop offset="0.48" stop-color="#c4daf5"/><stop offset="0.5" stop-color="#afcbf0"/><stop offset="1" stop-color="#a4c4ee"/></linearGradient></defs><path d="M0.5 23 V3 Q0.5 0.5 3 0.5 H215 Q220 0.5 222.5 5 L225.5 11 V23 Z" fill="url(#tg428)" stroke="#7a9acb" stroke-width="1"/><path d="M2 1.5 H215" stroke="#eef5fd" stroke-width="1"/></svg>
<div style="position:absolute;left:434px;top:153px;width:16px;height:16px;border-radius:50%;background:linear-gradient(#fbc70c 0%,#f8a808 45%,#f28400 75%,#ee6a00 100%);color:#fff;font-size:7px;line-height:16px;text-align:center;font-family:'Liberation Sans',sans-serif;letter-spacing:-0.4px;text-shadow:0 0 1px #a85a00">DPS</div>
<div style="position:absolute;left:453px;top:154px;white-space:nowrap;font-size:12px;line-height:14px;color:#111;letter-spacing:0px">金印客校园推广宣传报改<span style="font-family:'Liberation Mono',monospace;font-size:11.5px;letter-spacing:-0.8px">.dpsf</span></div>
<svg class="a" style="left:625.5px;top:156px" width="12" height="12" viewBox="0 0 12 12"><path d="M2.5 2.5 L9.5 9.5 M9.5 2.5 L2.5 9.5" stroke="#4a505a" stroke-width="4.2" stroke-linecap="round"/><path d="M2.5 2.5 L9.5 9.5 M9.5 2.5 L2.5 9.5" stroke="#f4f6f8" stroke-width="2.2" stroke-linecap="round"/></svg>
<svg class="a" style="left:654px;top:150px" width="322" height="23" viewBox="0 0 322 23"><defs><linearGradient id="tg654" x1="0" y1="0" x2="0" y2="1"><stop offset="0" stop-color="#ffefd0"/><stop offset="0.35" stop-color="#fdd590"/><stop offset="0.55" stop-color="#f9ab44"/><stop offset="0.8" stop-color="#fbc850"/><stop offset="1" stop-color="#fcdc68"/></linearGradient></defs><path d="M0.5 23 V3 Q0.5 0.5 3 0.5 H299 Q305 0.5 308 6 L317 20 Q319 23 321.5 23 Z" fill="url(#tg654)" stroke="#8a7650" stroke-width="1"/></svg>
<div style="position:absolute;left:660px;top:153px;width:16px;height:16px;border-radius:50%;background:linear-gradient(#fbc70c 0%,#f8a808 45%,#f28400 75%,#ee6a00 100%);color:#fff;font-size:7px;line-height:16px;text-align:center;font-family:'Liberation Sans',sans-serif;letter-spacing:-0.4px;text-shadow:0 0 1px #a85a00">DPS</div>
<div style="position:absolute;left:679px;top:154px;white-space:nowrap;font-size:12px;line-height:14px;color:#111;letter-spacing:0px">书<span style="font-family:'Liberation Mono',monospace;font-size:11.5px;letter-spacing:-0.8px">-</span>大<span style="font-family:'Liberation Mono',monospace;font-size:11.5px;letter-spacing:-0.8px">16</span>开软皮平装<span style="font-family:'Liberation Mono',monospace;font-size:11.5px;letter-spacing:-0.8px">-</span>文档<span style="font-family:'Liberation Mono',monospace;font-size:11.5px;letter-spacing:-0.8px">20190115-1108.dpsf*</span></div>
<svg class="a" style="left:935.5px;top:156px" width="12" height="12" viewBox="0 0 12 12"><path d="M2.5 2.5 L9.5 9.5 M9.5 2.5 L2.5 9.5" stroke="#4a505a" stroke-width="4.2" stroke-linecap="round"/><path d="M2.5 2.5 L9.5 9.5 M9.5 2.5 L2.5 9.5" stroke="#f4f6f8" stroke-width="2.2" stroke-linecap="round"/></svg>
<div style="position:absolute;left:0px;top:148px;width:32px;height:436px;background:#efefef;border-right:1px solid #b4b4b4"></div>
<div style="position:absolute;left:0px;top:277px;width:31px;height:53px;background:#fdfdfd;border-top:1px solid #e0e0e0;border-bottom:1px solid #e0e0e0"></div>
<svg class="a" style="left:8px;top:153px" width="14" height="15" viewBox="0 0 14 15"><rect x="0" y="1" width="3" height="13" fill="#8a8a8a"/><path d="M5 1 L13 7.5 L5 14 Z" fill="#8a8a8a"/></svg>
<svg class="a" style="left:0px;top:176px" width="30" height="28" viewBox="0 176 30 28">
<g transform="rotate(13 15 192.5)"><rect x="5.8" y="186.3" width="18.5" height="12" rx="1.5" fill="none" stroke="#6e6e6e" stroke-width="2.5"/>
<path d="M8.5 196.5 L10.5 192.5 L12 194.5 L14 191 L16 194 L19 189.5 L20.5 196.5 Z" fill="#6e6e6e"/><circle cx="12" cy="189.5" r="1.3" fill="#6e6e6e"/></g>
<path d="M2.8 189.5 Q4.5 183 10 182.5" fill="none" stroke="#f0f0f0" stroke-width="4.5"/>
<path d="M2.8 189.5 Q4.5 183 10 182.5" fill="none" stroke="#6e6e6e" stroke-width="2.6"/><path d="M7.5 179 L13.5 182.8 L8.5 186.5 Z" fill="#6e6e6e"/></svg>
<svg class="a" style="left:3px;top:231px" width="25" height="22" viewBox="0 0 25 22">
<rect x="1.2" y="1.2" width="22.6" height="19.6" fill="none" stroke="#6e6e6e" stroke-width="2.4"/><path d="M3 16 Q8 9 12 11 Q17 13 22 7" fill="none" stroke="#6e6e6e" stroke-width="1.8"/></svg>
<svg class="a" style="left:2px;top:282px" width="25" height="24" viewBox="0 0 25 24"><rect x="1.2" y="1.2" width="22" height="21.6" fill="#fff" stroke="#dc6418" stroke-width="2.4"/><rect x="3" y="3" width="18.4" height="18" fill="none" stroke="#f2a878" stroke-width="1" stroke-dasharray="1 1"/></svg>
<svg class="a" style="left:3px;top:334px" width="25" height="24" viewBox="0 0 25 24">
<path d="M7 2 L9.5 5 L12.5 1 L15.5 5 L18 2 V9 Q18 13 12.5 13 Q7 13 7 9 Z" fill="#6e6e6e"/><rect x="11" y="12" width="3" height="11" fill="#6e6e6e"/>
<path d="M0.5 12 Q7 11 11 18 Q11 22 8 22 Q1 21 0.5 12 Z" fill="#6e6e6e"/><path d="M24.5 12 Q18 11 14 18 Q14 22 17 22 Q24 21 24.5 12 Z" fill="#6e6e6e"/></svg>
<svg class="a" style="left:3px;top:385px" width="24" height="25" viewBox="0 0 24 25">
<rect x="1.2" y="1.2" width="21.6" height="22.6" fill="none" stroke="#6e6e6e" stroke-width="2.4"/><path d="M8 2 V24 M15.5 2 V24 M2 9 H22 M2 16.5 H22" stroke="#6e6e6e" stroke-width="2"/></svg>
<svg class="a" style="left:3px;top:437px" width="24" height="25" viewBox="0 0 24 25">
<rect x="1.2" y="1.2" width="21.6" height="22.6" fill="none" stroke="#6e6e6e" stroke-width="2.4"/><path d="M2 7 H22" stroke="#6e6e6e" stroke-width="2.4"/><rect x="4" y="10" width="6" height="11" fill="#6e6e6e"/><path d="M12 11 H20 M12 14.5 H20 M12 18 H20" stroke="#6e6e6e" stroke-width="1.8"/></svg>
<svg class="a" style="left:2px;top:489px" width="26" height="25" viewBox="0 0 26 25"><circle cx="13" cy="12.5" r="10" fill="#6e6e6e"/>
<circle cx="23.0" cy="12.5" r="2.8" fill="#6e6e6e"/><circle cx="21.1" cy="18.4" r="2.8" fill="#6e6e6e"/><circle cx="16.1" cy="22.0" r="2.8" fill="#6e6e6e"/><circle cx="9.9" cy="22.0" r="2.8" fill="#6e6e6e"/><circle cx="4.9" cy="18.4" r="2.8" fill="#6e6e6e"/><circle cx="3.0" cy="12.5" r="2.8" fill="#6e6e6e"/><circle cx="4.9" cy="6.6" r="2.8" fill="#6e6e6e"/><circle cx="9.9" cy="3.0" r="2.8" fill="#6e6e6e"/><circle cx="16.1" cy="3.0" r="2.8" fill="#6e6e6e"/><circle cx="21.1" cy="6.6" r="2.8" fill="#6e6e6e"/></svg>
<svg class="a" style="left:2px;top:540px" width="25" height="25" viewBox="0 0 25 25"><polygon points="12.50,1.50 15.56,8.79 23.44,9.45 17.45,14.61 19.26,22.30 12.50,18.20 5.74,22.30 7.55,14.61 1.56,9.45 9.44,8.79" fill="#6e6e6e" stroke="#6e6e6e" stroke-width="2" stroke-linejoin="round"/></svg>
<div class="a" style="left:0;top:206px;width:30px;text-align:center;font-size:13px;line-height:15px;color:#6e6e6e">图库</div>
<div class="a" style="left:0;top:258px;width:30px;text-align:center;font-size:13px;line-height:15px;color:#6e6e6e">背景</div>
<div class="a" style="left:0;top:310px;width:30px;text-align:center;font-size:13px;line-height:15px;color:#d86a18">边框</div>
<div class="a" style="left:0;top:362px;width:30px;text-align:center;font-size:13px;line-height:15px;color:#6e6e6e">素材</div>
<div class="a" style="left:0;top:414px;width:30px;text-align:center;font-size:13px;line-height:15px;color:#6e6e6e">版式</div>
<div class="a" style="left:0;top:466px;width:30px;text-align:center;font-size:13px;line-height:15px;color:#6e6e6e">模板</div>
<div class="a" style="left:0;top:518px;width:30px;text-align:center;font-size:13px;line-height:15px;color:#6e6e6e">形状</div>
<div class="a" style="left:0;top:570px;width:30px;text-align:center;font-size:13px;line-height:15px;color:#6e6e6e">收藏</div>
<div style="position:absolute;left:31px;top:172px;width:1314px;height:1.5px;background:#7393c2"></div>
<div style="position:absolute;left:32px;top:174px;width:1313px;height:16px;background:#fff"></div>
<svg class="a" style="left:0;top:173px" width="1345" height="18" viewBox="0 173 1345 18"><rect x="33" y="189.8" width="1312" height="1.1" fill="#111"/><path d="M54.5 177 V190" stroke="#111" stroke-width="1"/><path d="M58.5 186 V190" stroke="#111" stroke-width="1"/><path d="M62.5 186 V190" stroke="#111" stroke-width="1"/><path d="M66.5 186 V190" stroke="#111" stroke-width="1"/><path d="M69.5 186 V190" stroke="#111" stroke-width="1"/><path d="M73.5 186 V190" stroke="#111" stroke-width="1"/><path d="M77.5 186 V190" stroke="#111" stroke-width="1"/><path d="M81.5 186 V190" stroke="#111" stroke-width="1"/><path d="M85.5 186 V190" stroke="#111" stroke-width="1"/><path d="M89.5 186 V190" stroke="#111" stroke-width="1"/><path d="M93.5 177 V190" stroke="#111" stroke-width="1"/><path d="M97.5 186 V190" stroke="#111" stroke-width="1"/><path d="M101.5 186 V190" stroke="#111" stroke-width="1"/><path d="M105.5 186 V190" stroke="#111" stroke-width="1"/><path d="M109.5 186 V190" stroke="#111" stroke-width="1"/><path d="M113.5 186 V190" stroke="#111" stroke-width="1"/><path d="M117.5 186 V190" stroke="#111" stroke-width="1"/><path d="M121.5 186 V190" stroke="#111" stroke-width="1"/><path d="M125.5 186 V190" stroke="#111" stroke-width="1"/><path d="M129.5 186 V190" stroke="#111" stroke-width="1"/><path d="M133.5 177 V190" stroke="#111" stroke-width="1"/><path d="M137.5 186 V190" stroke="#111" stroke-width="1"/><path d="M141.5 186 V190" stroke="#111" stroke-width="1"/><path d="M145.5 186 V190" stroke="#111" stroke-width="1"/><path d="M149.5 186 V190" stroke="#111" stroke-width="1"/><path d="M153.5 186 V190" stroke="#111" stroke-width="1"/><path d="M157.5 186 V190" stroke="#111" stroke-width="1"/><path d="M161.5 186 V190" stroke="#111" stroke-width="1"/><path d="M165.5 186 V190" stroke="#111" stroke-width="1"/><path d="M169.5 186 V190" stroke="#111" stroke-width="1"/><path d="M173.5 177 V190" stroke="#111" stroke-width="1"/><path d="M177.5 186 V190" stroke="#111" stroke-width="1"/><path d="M181.5 186 V190" stroke="#111" stroke-width="1"/><path d="M185.5 186 V190" stroke="#111" stroke-width="1"/><path d="M189.5 186 V190" stroke="#111" stroke-width="1"/><path d="M193.5 186 V190" stroke="#111" stroke-width="1"/><path d="M197.5 186 V190" stroke="#111" stroke-width="1"/><path d="M200.5 186 V190" stroke="#111" stroke-width="1"/><path d="M204.5 186 V190" stroke="#111" stroke-width="1"/><path d="M208.5 186 V190" stroke="#111" stroke-width="1"/><path d="M212.5 177 V190" stroke="#4a4ac0" stroke-width="1.5"/><path d="M217.0 184 V190" stroke="#8585d6" stroke-width="2"/><path d="M221.0 184 V190" stroke="#8585d6" stroke-width="2"/><path d="M225.0 184 V190" stroke="#8585d6" stroke-width="2"/><path d="M229.0 184 V190" stroke="#8585d6" stroke-width="2"/><path d="M233.0 184 V190" stroke="#8585d6" stroke-width="2"/><path d="M237.0 184 V190" stroke="#8585d6" stroke-width="2"/><path d="M241.0 184 V190" stroke="#8585d6" stroke-width="2"/><path d="M245.0 184 V190" stroke="#8585d6" stroke-width="2"/><path d="M249.0 184 V190" stroke="#8585d6" stroke-width="2"/><path d="M252.5 177 V190" stroke="#4a4ac0" stroke-width="1.5"/><path d="M257.0 184 V190" stroke="#8585d6" stroke-width="2"/><path d="M261.0 184 V190" stroke="#8585d6" stroke-width="2"/><path d="M265.0 184 V190" stroke="#8585d6" stroke-width="2"/><path d="M269.0 184 V190" stroke="#8585d6" stroke-width="2"/><path d="M273.0 184 V190" stroke="#8585d6" stroke-width="2"/><path d="M277.0 184 V190" stroke="#8585d6" stroke-width="2"/><path d="M281.0 184 V190" stroke="#8585d6" stroke-width="2"/><path d="M284.0 184 V190" stroke="#8585d6" stroke-width="2"/><path d="M288.0 184 V190" stroke="#8585d6" stroke-width="2"/><path d="M291.5 177 V190" stroke="#4a4ac0" stroke-width="1.5"/><path d="M296.0 184 V190" stroke="#8585d6" stroke-width="2"/><path d="M300.0 184 V190" stroke="#8585d6" stroke-width="2"/><path d="M304.0 184 V190" stroke="#8585d6" stroke-width="2"/><path d="M308.0 184 V190" stroke="#8585d6" stroke-width="2"/><path d="M312.0 184 V190" stroke="#8585d6" stroke-width="2"/><path d="M316.0 184 V190" stroke="#8585d6" stroke-width="2"/><path d="M320.0 184 V190" stroke="#8585d6" stroke-width="2"/><path d="M324.0 184 V190" stroke="#8585d6" stroke-width="2"/><path d="M328.0 184 V190" stroke="#8585d6" stroke-width="2"/><path d="M331.5 177 V190" stroke="#4a4ac0" stroke-width="1.5"/><path d="M336.0 184 V190" stroke="#8585d6" stroke-width="2"/><path d="M340.0 184 V190" stroke="#8585d6" stroke-width="2"/><path d="M344.0 184 V190" stroke="#8585d6" stroke-width="2"/><path d="M348.0 184 V190" stroke="#8585d6" stroke-width="2"/><path d="M352.0 184 V190" stroke="#8585d6" stroke-width="2"/><path d="M356.0 184 V190" stroke="#8585d6" stroke-width="2"/><path d="M360.0 184 V190" stroke="#8585d6" stroke-width="2"/><path d="M364.0 184 V190" stroke="#8585d6" stroke-width="2"/><path d="M368.0 184 V190" stroke="#8585d6" stroke-width="2"/><path d="M371.5 177 V190" stroke="#4a4ac0" stroke-width="1.5"/><path d="M376.0 184 V190" stroke="#8585d6" stroke-width="2"/><path d="M380.0 184 V190" stroke="#8585d6" stroke-width="2"/><path d="M384.0 184 V190" stroke="#8585d6" stroke-width="2"/><path d="M388.0 184 V190" stroke="#8585d6" stroke-width="2"/><path d="M392.0 184 V190" stroke="#8585d6" stroke-width="2"/><path d="M395.0 184 V190" stroke="#8585d6" stroke-width="2"/><path d="M399.0 184 V190" stroke="#8585d6" stroke-width="2"/><path d="M403.0 184 V190" stroke="#8585d6" stroke-width="2"/><path d="M407.0 184 V190" stroke="#8585d6" stroke-width="2"/><path d="M410.5 177 V190" stroke="#4a4ac0" stroke-width="1.5"/><path d="M415.0 184 V190" stroke="#8585d6" stroke-width="2"/><path d="M419.0 184 V190" stroke="#8585d6" stroke-width="2"/><path d="M423.0 184 V190" stroke="#8585d6" stroke-width="2"/><path d="M427.0 184 V190" stroke="#8585d6" stroke-width="2"/><path d="M431.0 184 V190" stroke="#8585d6" stroke-width="2"/><path d="M435.0 184 V190" stroke="#8585d6" stroke-width="2"/><path d="M439.0 184 V190" stroke="#8585d6" stroke-width="2"/><path d="M443.0 184 V190" stroke="#8585d6" stroke-width="2"/><path d="M447.0 184 V190" stroke="#8585d6" stroke-width="2"/><path d="M450.5 177 V190" stroke="#4a4ac0" stroke-width="1.5"/><path d="M455.0 184 V190" stroke="#8585d6" stroke-width="2"/><path d="M459.0 184 V190" stroke="#8585d6" stroke-width="2"/><path d="M463.0 184 V190" stroke="#8585d6" stroke-width="2"/><path d="M467.0 184 V190" stroke="#8585d6" stroke-width="2"/><path d="M471.0 184 V190" stroke="#8585d6" stroke-width="2"/><path d="M475.0 184 V190" stroke="#8585d6" stroke-width="2"/><path d="M479.0 184 V190" stroke="#8585d6" stroke-width="2"/><path d="M483.0 184 V190" stroke="#8585d6" stroke-width="2"/><path d="M487.0 184 V190" stroke="#8585d6" stroke-width="2"/><path d="M490.5 177 V190" stroke="#4a4ac0" stroke-width="1.5"/><path d="M495.0 184 V190" stroke="#8585d6" stroke-width="2"/><path d="M499.0 184 V190" stroke="#8585d6" stroke-width="2"/><path d="M503.0 184 V190" stroke="#8585d6" stroke-width="2"/><path d="M507.0 184 V190" stroke="#8585d6" stroke-width="2"/><path d="M510.0 184 V190" stroke="#8585d6" stroke-width="2"/><path d="M514.0 184 V190" stroke="#8585d6" stroke-width="2"/><path d="M518.0 184 V190" stroke="#8585d6" stroke-width="2"/><path d="M522.0 184 V190" stroke="#8585d6" stroke-width="2"/><path d="M526.0 184 V190" stroke="#8585d6" stroke-width="2"/><path d="M529.5 177 V190" stroke="#4a4ac0" stroke-width="1.5"/><path d="M534.0 184 V190" stroke="#8585d6" stroke-width="2"/><path d="M538.0 184 V190" stroke="#8585d6" stroke-width="2"/><path d="M542.0 184 V190" stroke="#8585d6" stroke-width="2"/><path d="M546.0 184 V190" stroke="#8585d6" stroke-width="2"/><path d="M550.0 184 V190" stroke="#8585d6" stroke-width="2"/><path d="M554.0 184 V190" stroke="#8585d6" stroke-width="2"/><path d="M558.0 184 V190" stroke="#8585d6" stroke-width="2"/><path d="M562.0 184 V190" stroke="#8585d6" stroke-width="2"/><path d="M566.0 184 V190" stroke="#8585d6" stroke-width="2"/><path d="M569.5 177 V190" stroke="#4a4ac0" stroke-width="1.5"/><path d="M574.0 184 V190" stroke="#8585d6" stroke-width="2"/><path d="M578.0 184 V190" stroke="#8585d6" stroke-width="2"/><path d="M582.0 184 V190" stroke="#8585d6" stroke-width="2"/><path d="M586.0 184 V190" stroke="#8585d6" stroke-width="2"/><path d="M590.0 184 V190" stroke="#8585d6" stroke-width="2"/><path d="M594.0 184 V190" stroke="#8585d6" stroke-width="2"/><path d="M598.0 184 V190" stroke="#8585d6" stroke-width="2"/><path d="M602.0 184 V190" stroke="#8585d6" stroke-width="2"/><path d="M606.0 184 V190" stroke="#8585d6" stroke-width="2"/><path d="M609.5 177 V190" stroke="#4a4ac0" stroke-width="1.5"/><path d="M614.0 184 V190" stroke="#8585d6" stroke-width="2"/><path d="M618.0 184 V190" stroke="#8585d6" stroke-width="2"/><path d="M621.0 184 V190" stroke="#8585d6" stroke-width="2"/><path d="M625.0 184 V190" stroke="#8585d6" stroke-width="2"/><path d="M629.0 184 V190" stroke="#8585d6" stroke-width="2"/><path d="M633.0 184 V190" stroke="#8585d6" stroke-width="2"/><path d="M637.0 184 V190" stroke="#8585d6" stroke-width="2"/><path d="M641.0 184 V190" stroke="#8585d6" stroke-width="2"/><path d="M645.0 184 V190" stroke="#8585d6" stroke-width="2"/><path d="M648.5 177 V190" stroke="#4a4ac0" stroke-width="1.5"/><path d="M653.0 184 V190" stroke="#8585d6" stroke-width="2"/><path d="M657.0 184 V190" stroke="#8585d6" stroke-width="2"/><path d="M661.0 184 V190" stroke="#8585d6" stroke-width="2"/><path d="M665.0 184 V190" stroke="#8585d6" stroke-width="2"/><path d="M669.0 184 V190" stroke="#8585d6" stroke-width="2"/><path d="M673.0 184 V190" stroke="#8585d6" stroke-width="2"/><path d="M677.0 184 V190" stroke="#8585d6" stroke-width="2"/><path d="M681.0 184 V190" stroke="#8585d6" stroke-width="2"/><path d="M685.0 184 V190" stroke="#8585d6" stroke-width="2"/><path d="M688.5 177 V190" stroke="#4a4ac0" stroke-width="1.5"/><path d="M693.0 184 V190" stroke="#8585d6" stroke-width="2"/><path d="M697.0 184 V190" stroke="#8585d6" stroke-width="2"/><path d="M701.0 184 V190" stroke="#8585d6" stroke-width="2"/><path d="M705.0 184 V190" stroke="#8585d6" stroke-width="2"/><path d="M709.0 184 V190" stroke="#8585d6" stroke-width="2"/><path d="M713.0 184 V190" stroke="#8585d6" stroke-width="2"/><path d="M717.0 184 V190" stroke="#8585d6" stroke-width="2"/><path d="M721.0 184 V190" stroke="#8585d6" stroke-width="2"/><path d="M725.0 184 V190" stroke="#8585d6" stroke-width="2"/><path d="M728.5 177 V190" stroke="#4a4ac0" stroke-width="1.5"/><path d="M733.0 184 V190" stroke="#8585d6" stroke-width="2"/><path d="M736.0 184 V190" stroke="#8585d6" stroke-width="2"/><path d="M740.0 184 V190" stroke="#8585d6" stroke-width="2"/><path d="M744.0 184 V190" stroke="#8585d6" stroke-width="2"/><path d="M748.0 184 V190" stroke="#8585d6" stroke-width="2"/><path d="M752.0 184 V190" stroke="#8585d6" stroke-width="2"/><path d="M756.0 184 V190" stroke="#8585d6" stroke-width="2"/><path d="M760.0 184 V190" stroke="#8585d6" stroke-width="2"/><path d="M764.0 184 V190" stroke="#8585d6" stroke-width="2"/><path d="M767.5 177 V190" stroke="#4a4ac0" stroke-width="1.5"/><path d="M772.0 184 V190" stroke="#8585d6" stroke-width="2"/><path d="M776.0 184 V190" stroke="#8585d6" stroke-width="2"/><path d="M780.0 184 V190" stroke="#8585d6" stroke-width="2"/><path d="M784.0 184 V190" stroke="#8585d6" stroke-width="2"/><path d="M788.0 184 V190" stroke="#8585d6" stroke-width="2"/><path d="M792.0 184 V190" stroke="#8585d6" stroke-width="2"/><path d="M796.0 184 V190" stroke="#8585d6" stroke-width="2"/><path d="M800.0 184 V190" stroke="#8585d6" stroke-width="2"/><path d="M804.0 184 V190" stroke="#8585d6" stroke-width="2"/><path d="M807.5 177 V190" stroke="#4a4ac0" stroke-width="1.5"/><path d="M812.0 184 V190" stroke="#8585d6" stroke-width="2"/><path d="M816.0 184 V190" stroke="#8585d6" stroke-width="2"/><path d="M820.0 184 V190" stroke="#8585d6" stroke-width="2"/><path d="M824.0 184 V190" stroke="#8585d6" stroke-width="2"/><path d="M828.0 184 V190" stroke="#8585d6" stroke-width="2"/><path d="M832.0 184 V190" stroke="#8585d6" stroke-width="2"/><path d="M836.0 184 V190" stroke="#8585d6" stroke-width="2"/><path d="M840.0 184 V190" stroke="#8585d6" stroke-width="2"/><path d="M844.0 184 V190" stroke="#8585d6" stroke-width="2"/><path d="M847.5 177 V190" stroke="#4a4ac0" stroke-width="1.5"/><path d="M851.0 184 V190" stroke="#8585d6" stroke-width="2"/><path d="M855.0 184 V190" stroke="#8585d6" stroke-width="2"/><path d="M859.0 184 V190" stroke="#8585d6" stroke-width="2"/><path d="M863.0 184 V190" stroke="#8585d6" stroke-width="2"/><path d="M867.0 184 V190" stroke="#8585d6" stroke-width="2"/><path d="M871.0 184 V190" stroke="#8585d6" stroke-width="2"/><path d="M875.0 184 V190" stroke="#8585d6" stroke-width="2"/><path d="M879.0 184 V190" stroke="#8585d6" stroke-width="2"/><path d="M883.0 184 V190" stroke="#8585d6" stroke-width="2"/><path d="M886.5 177 V190" stroke="#4a4ac0" stroke-width="1.5"/><path d="M891.5 186 V190" stroke="#111" stroke-width="1"/><path d="M895.5 186 V190" stroke="#111" stroke-width="1"/><path d="M899.5 186 V190" stroke="#111" stroke-width="1"/><path d="M903.5 186 V190" stroke="#111" stroke-width="1"/><path d="M907.5 186 V190" stroke="#111" stroke-width="1"/><path d="M911.5 186 V190" stroke="#111" stroke-width="1"/><path d="M915.5 186 V190" stroke="#111" stroke-width="1"/><path d="M919.5 186 V190" stroke="#111" stroke-width="1"/><path d="M923.5 186 V190" stroke="#111" stroke-width="1"/><path d="M927.5 177 V190" stroke="#111" stroke-width="1"/><path d="M931.5 186 V190" stroke="#111" stroke-width="1"/><path d="M935.5 186 V190" stroke="#111" stroke-width="1"/><path d="M939.5 186 V190" stroke="#111" stroke-width="1"/><path d="M943.5 186 V190" stroke="#111" stroke-width="1"/><path d="M947.5 186 V190" stroke="#111" stroke-width="1"/><path d="M951.5 186 V190" stroke="#111" stroke-width="1"/><path d="M955.5 186 V190" stroke="#111" stroke-width="1"/><path d="M959.5 186 V190" stroke="#111" stroke-width="1"/><path d="M963.5 186 V190" stroke="#111" stroke-width="1"/><path d="M967.5 177 V190" stroke="#111" stroke-width="1"/><path d="M971.5 186 V190" stroke="#111" stroke-width="1"/><path d="M975.5 186 V190" stroke="#111" stroke-width="1"/><path d="M979.5 186 V190" stroke="#111" stroke-width="1"/><path d="M983.5 186 V190" stroke="#111" stroke-width="1"/><path d="M987.5 186 V190" stroke="#111" stroke-width="1"/><path d="M991.5 186 V190" stroke="#111" stroke-width="1"/><path d="M994.5 186 V190" stroke="#111" stroke-width="1"/><path d="M998.5 186 V190" stroke="#111" stroke-width="1"/><path d="M1002.5 186 V190" stroke="#111" stroke-width="1"/><path d="M1006.5 177 V190" stroke="#111" stroke-width="1"/><path d="M1010.5 186 V190" stroke="#111" stroke-width="1"/><path d="M1014.5 186 V190" stroke="#111" stroke-width="1"/><path d="M1018.5 186 V190" stroke="#111" stroke-width="1"/><path d="M1022.5 186 V190" stroke="#111" stroke-width="1"/><path d="M1026.5 186 V190" stroke="#111" stroke-width="1"/><path d="M1030.5 186 V190" stroke="#111" stroke-width="1"/><path d="M1034.5 186 V190" stroke="#111" stroke-width="1"/><path d="M1038.5 186 V190" stroke="#111" stroke-width="1"/><path d="M1042.5 186 V190" stroke="#111" stroke-width="1"/><path d="M1046.5 177 V190" stroke="#111" stroke-width="1"/><path d="M1050.5 186 V190" stroke="#111" stroke-width="1"/><path d="M1054.5 186 V190" stroke="#111" stroke-width="1"/><path d="M1058.5 186 V190" stroke="#111" stroke-width="1"/><path d="M1062.5 186 V190" stroke="#111" stroke-width="1"/><path d="M1066.5 186 V190" stroke="#111" stroke-width="1"/><path d="M1070.5 186 V190" stroke="#111" stroke-width="1"/><path d="M1074.5 186 V190" stroke="#111" stroke-width="1"/><path d="M1078.5 186 V190" stroke="#111" stroke-width="1"/><path d="M1082.5 186 V190" stroke="#111" stroke-width="1"/><path d="M1086.5 177 V190" stroke="#111" stroke-width="1"/><path d="M1090.5 186 V190" stroke="#111" stroke-width="1"/><path d="M1094.5 186 V190" stroke="#111" stroke-width="1"/><path d="M1098.5 186 V190" stroke="#111" stroke-width="1"/><path d="M1102.5 186 V190" stroke="#111" stroke-width="1"/><path d="M1106.5 186 V190" stroke="#111" stroke-width="1"/><path d="M1110.5 186 V190" stroke="#111" stroke-width="1"/><path d="M1114.5 186 V190" stroke="#111" stroke-width="1"/><path d="M1118.5 186 V190" stroke="#111" stroke-width="1"/><path d="M1122.5 186 V190" stroke="#111" stroke-width="1"/><path d="M1125.5 177 V190" stroke="#111" stroke-width="1"/><path d="M1129.5 186 V190" stroke="#111" stroke-width="1"/><path d="M1133.5 186 V190" stroke="#111" stroke-width="1"/><path d="M1137.5 186 V190" stroke="#111" stroke-width="1"/><path d="M1141.5 186 V190" stroke="#111" stroke-width="1"/><path d="M1145.5 186 V190" stroke="#111" stroke-width="1"/><path d="M1149.5 186 V190" stroke="#111" stroke-width="1"/><path d="M1153.5 186 V190" stroke="#111" stroke-width="1"/><path d="M1157.5 186 V190" stroke="#111" stroke-width="1"/><path d="M1161.5 186 V190" stroke="#111" stroke-width="1"/><path d="M1165.5 177 V190" stroke="#111" stroke-width="1"/><path d="M1169.5 186 V190" stroke="#111" stroke-width="1"/><path d="M1173.5 186 V190" stroke="#111" stroke-width="1"/><path d="M1177.5 186 V190" stroke="#111" stroke-width="1"/><path d="M1181.5 186 V190" stroke="#111" stroke-width="1"/><path d="M1185.5 186 V190" stroke="#111" stroke-width="1"/><path d="M1189.5 186 V190" stroke="#111" stroke-width="1"/><path d="M1193.5 186 V190" stroke="#111" stroke-width="1"/><path d="M1197.5 186 V190" stroke="#111" stroke-width="1"/><path d="M1201.5 186 V190" stroke="#111" stroke-width="1"/><path d="M1205.5 177 V190" stroke="#111" stroke-width="1"/><path d="M1209.5 186 V190" stroke="#111" stroke-width="1"/><path d="M1213.5 186 V190" stroke="#111" stroke-width="1"/><path d="M1217.5 186 V190" stroke="#111" stroke-width="1"/><path d="M1221.5 186 V190" stroke="#111" stroke-width="1"/><path d="M1225.5 186 V190" stroke="#111" stroke-width="1"/><path d="M1229.5 186 V190" stroke="#111" stroke-width="1"/><path d="M1233.5 186 V190" stroke="#111" stroke-width="1"/><path d="M1237.5 186 V190" stroke="#111" stroke-width="1"/><path d="M1241.5 186 V190" stroke="#111" stroke-width="1"/><path d="M1245.5 177 V190" stroke="#111" stroke-width="1"/><path d="M1249.5 186 V190" stroke="#111" stroke-width="1"/><path d="M1253.5 186 V190" stroke="#111" stroke-width="1"/><path d="M1257.5 186 V190" stroke="#111" stroke-width="1"/><path d="M1260.5 186 V190" stroke="#111" stroke-width="1"/><path d="M1264.5 186 V190" stroke="#111" stroke-width="1"/><path d="M1268.5 186 V190" stroke="#111" stroke-width="1"/><path d="M1272.5 186 V190" stroke="#111" stroke-width="1"/><path d="M1276.5 186 V190" stroke="#111" stroke-width="1"/><path d="M1280.5 186 V190" stroke="#111" stroke-width="1"/><path d="M1284.5 177 V190" stroke="#111" stroke-width="1"/><path d="M1288.5 186 V190" stroke="#111" stroke-width="1"/><path d="M1292.5 186 V190" stroke="#111" stroke-width="1"/><path d="M1296.5 186 V190" stroke="#111" stroke-width="1"/><path d="M1300.5 186 V190" stroke="#111" stroke-width="1"/><path d="M1304.5 186 V190" stroke="#111" stroke-width="1"/><path d="M1308.5 186 V190" stroke="#111" stroke-width="1"/><path d="M1312.5 186 V190" stroke="#111" stroke-width="1"/><path d="M1316.5 186 V190" stroke="#111" stroke-width="1"/><path d="M1320.5 186 V190" stroke="#111" stroke-width="1"/><path d="M1324.5 177 V190" stroke="#111" stroke-width="1"/><path d="M1328.5 186 V190" stroke="#111" stroke-width="1"/><path d="M1332.5 186 V190" stroke="#111" stroke-width="1"/><path d="M1336.5 186 V190" stroke="#111" stroke-width="1"/><path d="M1340.5 186 V190" stroke="#111" stroke-width="1"/></svg>
<div class="a" style="left:56px;top:173px;font-size:11px;line-height:12px;color:#222;white-space:nowrap">-20</div>
<div class="a" style="left:95px;top:173px;font-size:11px;line-height:12px;color:#222;white-space:nowrap">-10</div>
<div class="a" style="left:135px;top:173px;font-size:11px;line-height:12px;color:#222;white-space:nowrap">0</div>
<div class="a" style="left:175px;top:173px;font-size:11px;line-height:12px;color:#222;white-space:nowrap">10</div>
<div class="a" style="left:254px;top:173px;font-size:11px;line-height:12px;color:#1a1a50;white-space:nowrap">10</div>
<div class="a" style="left:293px;top:173px;font-size:11px;line-height:12px;color:#1a1a50;white-space:nowrap">20</div>
<div class="a" style="left:333px;top:173px;font-size:11px;line-height:12px;color:#1a1a50;white-space:nowrap">30</div>
<div class="a" style="left:373px;top:173px;font-size:11px;line-height:12px;color:#1a1a50;white-space:nowrap">40</div>
<div class="a" style="left:412px;top:173px;font-size:11px;line-height:12px;color:#1a1a50;white-space:nowrap">50</div>
<div class="a" style="left:452px;top:173px;font-size:11px;line-height:12px;color:#1a1a50;white-space:nowrap">60</div>
<div class="a" style="left:492px;top:173px;font-size:11px;line-height:12px;color:#1a1a50;white-space:nowrap">70</div>
<div class="a" style="left:531px;top:173px;font-size:11px;line-height:12px;color:#1a1a50;white-space:nowrap">80</div>
<div class="a" style="left:571px;top:173px;font-size:11px;line-height:12px;color:#1a1a50;white-space:nowrap">90</div>
<div class="a" style="left:611px;top:173px;font-size:11px;line-height:12px;color:#1a1a50;white-space:nowrap">100</div>
<div class="a" style="left:650px;top:173px;font-size:11px;line-height:12px;color:#1a1a50;white-space:nowrap">110</div>
<div class="a" style="left:690px;top:173px;font-size:11px;line-height:12px;color:#1a1a50;white-space:nowrap">120</div>
<div class="a" style="left:730px;top:173px;font-size:11px;line-height:12px;color:#1a1a50;white-space:nowrap">130</div>
<div class="a" style="left:769px;top:173px;font-size:11px;line-height:12px;color:#1a1a50;white-space:nowrap">140</div>
<div class="a" style="left:809px;top:173px;font-size:11px;line-height:12px;color:#1a1a50;white-space:nowrap">150</div>
<div class="a" style="left:849px;top:173px;font-size:11px;line-height:12px;color:#1a1a50;white-space:nowrap">160</div>
<div class="a" style="left:888px;top:173px;font-size:11px;line-height:12px;color:#1a1a50;white-space:nowrap">190</div>
<div class="a" style="left:214px;top:173px;font-size:11px;line-height:12px;color:#1a1a50;white-space:nowrap">0</div>
<div class="a" style="left:929px;top:173px;font-size:11px;line-height:12px;color:#222;white-space:nowrap">200</div>
<div class="a" style="left:969px;top:173px;font-size:11px;line-height:12px;color:#222;white-space:nowrap">210</div>
<div class="a" style="left:1008px;top:173px;font-size:11px;line-height:12px;color:#222;white-space:nowrap">220</div>
<div class="a" style="left:1048px;top:173px;font-size:11px;line-height:12px;color:#222;white-space:nowrap">230</div>
<div class="a" style="left:1088px;top:173px;font-size:11px;line-height:12px;color:#222;white-space:nowrap">240</div>
<div class="a" style="left:1127px;top:173px;font-size:11px;line-height:12px;color:#222;white-space:nowrap">250</div>
<div class="a" style="left:1167px;top:173px;font-size:11px;line-height:12px;color:#222;white-space:nowrap">260</div>
<div class="a" style="left:1207px;top:173px;font-size:11px;line-height:12px;color:#222;white-space:nowrap">270</div>
<div class="a" style="left:1247px;top:173px;font-size:11px;line-height:12px;color:#222;white-space:nowrap">280</div>
<div class="a" style="left:1286px;top:173px;font-size:11px;line-height:12px;color:#222;white-space:nowrap">290</div>
<div class="a" style="left:1326px;top:173px;font-size:11px;line-height:12px;color:#222;white-space:nowrap">300</div>
<svg class="a" style="left:209px;top:175px" width="10" height="16" viewBox="0 0 10 16"><path d="M4 14 V2.5 H7.5" stroke="#1830d0" stroke-width="2.2" fill="none"/><path d="M0.5 15 L4 9 L7.5 15 Z" fill="#1830d0"/></svg>
<div class="a" style="left:242px;top:176px;width:0;height:0;border-left:4px solid transparent;border-right:4px solid transparent;border-top:7px solid #1830d0"></div>
<div class="a" style="left:728px;top:174px;width:0;height:0;border-left:3.5px solid transparent;border-right:3.5px solid transparent;border-top:6px solid #e02020"></div>
<div style="position:absolute;left:731px;top:174px;width:1px;height:16px;background:#e02020"></div>
<svg class="a" style="left:882px;top:177px" width="9" height="14" viewBox="0 0 9 14"><path d="M1.5 1 H5.5 V13 H1.5 Z" fill="#1830d0"/></svg>
<svg class="a" style="left:32px;top:173px" width="18" height="17" viewBox="0 0 18 17"><path d="M1 10.5 H17" stroke="#333" stroke-width="1" stroke-dasharray="1 1"/><path d="M11.5 2 V16" stroke="#333" stroke-width="1" stroke-dasharray="1 1"/></svg>
<div style="position:absolute;left:32px;top:191px;width:18px;height:379px;background:#fff"></div>
<svg class="a" style="left:32px;top:174px" width="19" height="396" viewBox="32 174 19 396"><rect x="49" y="174" width="1.2" height="396" fill="#111"/><path d="M45 194.5 H50" stroke="#111" stroke-width="1"/><path d="M36 198.5 H50" stroke="#111" stroke-width="1"/><path d="M45 202.5 H50" stroke="#111" stroke-width="1"/><path d="M45 206.5 H50" stroke="#111" stroke-width="1"/><path d="M45 209.5 H50" stroke="#111" stroke-width="1"/><path d="M45 213.5 H50" stroke="#111" stroke-width="1"/><path d="M45 217.5 H50" stroke="#111" stroke-width="1"/><path d="M45 221.5 H50" stroke="#111" stroke-width="1"/><path d="M45 225.5 H50" stroke="#111" stroke-width="1"/><path d="M45 229.5 H50" stroke="#111" stroke-width="1"/><path d="M45 233.5 H50" stroke="#111" stroke-width="1"/><path d="M36 237.5 H50" stroke="#111" stroke-width="1"/><path d="M45 241.5 H50" stroke="#111" stroke-width="1"/><path d="M45 245.5 H50" stroke="#111" stroke-width="1"/><path d="M45 249.5 H50" stroke="#111" stroke-width="1"/><path d="M45 253.5 H50" stroke="#111" stroke-width="1"/><path d="M45 257.5 H50" stroke="#111" stroke-width="1"/><path d="M45 261.5 H50" stroke="#111" stroke-width="1"/><path d="M45 265.5 H50" stroke="#111" stroke-width="1"/><path d="M45 269.5 H50" stroke="#111" stroke-width="1"/><path d="M45 273.5 H50" stroke="#111" stroke-width="1"/><path d="M36 277.5 H50" stroke="#111" stroke-width="1"/><path d="M45 281.5 H50" stroke="#111" stroke-width="1"/><path d="M45 285.5 H50" stroke="#111" stroke-width="1"/><path d="M45 289.5 H50" stroke="#111" stroke-width="1"/><path d="M45 293.5 H50" stroke="#111" stroke-width="1"/><path d="M45 297.5 H50" stroke="#111" stroke-width="1"/><path d="M45 301.5 H50" stroke="#111" stroke-width="1"/><path d="M45 305.5 H50" stroke="#111" stroke-width="1"/><path d="M45 309.5 H50" stroke="#111" stroke-width="1"/><path d="M45 313.5 H50" stroke="#111" stroke-width="1"/><path d="M36 316.5 H50" stroke="#111" stroke-width="1"/><path d="M45 320.5 H50" stroke="#111" stroke-width="1"/><path d="M45 324.5 H50" stroke="#111" stroke-width="1"/><path d="M45 328.5 H50" stroke="#111" stroke-width="1"/><path d="M45 332.5 H50" stroke="#111" stroke-width="1"/><path d="M45 336.5 H50" stroke="#111" stroke-width="1"/><path d="M45 340.5 H50" stroke="#111" stroke-width="1"/><path d="M45 344.5 H50" stroke="#111" stroke-width="1"/><path d="M45 348.5 H50" stroke="#111" stroke-width="1"/><path d="M45 352.5 H50" stroke="#111" stroke-width="1"/><path d="M36 356.5 H50" stroke="#111" stroke-width="1"/><path d="M45 360.5 H50" stroke="#111" stroke-width="1"/><path d="M45 364.5 H50" stroke="#111" stroke-width="1"/><path d="M45 368.5 H50" stroke="#111" stroke-width="1"/><path d="M45 372.5 H50" stroke="#111" stroke-width="1"/><path d="M45 376.5 H50" stroke="#111" stroke-width="1"/><path d="M45 380.5 H50" stroke="#111" stroke-width="1"/><path d="M45 384.5 H50" stroke="#111" stroke-width="1"/><path d="M45 388.5 H50" stroke="#111" stroke-width="1"/><path d="M45 392.5 H50" stroke="#111" stroke-width="1"/><path d="M36 396.5 H50" stroke="#111" stroke-width="1"/><path d="M45 400.5 H50" stroke="#111" stroke-width="1"/><path d="M45 404.5 H50" stroke="#111" stroke-width="1"/><path d="M45 408.5 H50" stroke="#111" stroke-width="1"/><path d="M45 412.5 H50" stroke="#111" stroke-width="1"/><path d="M45 416.5 H50" stroke="#111" stroke-width="1"/><path d="M45 420.5 H50" stroke="#111" stroke-width="1"/><path d="M45 423.5 H50" stroke="#111" stroke-width="1"/><path d="M45 427.5 H50" stroke="#111" stroke-width="1"/><path d="M45 431.5 H50" stroke="#111" stroke-width="1"/><path d="M36 435.5 H50" stroke="#111" stroke-width="1"/><path d="M45 439.5 H50" stroke="#111" stroke-width="1"/><path d="M45 443.5 H50" stroke="#111" stroke-width="1"/><path d="M45 447.5 H50" stroke="#111" stroke-width="1"/><path d="M45 451.5 H50" stroke="#111" stroke-width="1"/><path d="M45 455.5 H50" stroke="#111" stroke-width="1"/><path d="M45 459.5 H50" stroke="#111" stroke-width="1"/><path d="M45 463.5 H50" stroke="#111" stroke-width="1"/><path d="M45 467.5 H50" stroke="#111" stroke-width="1"/><path d="M45 471.5 H50" stroke="#111" stroke-width="1"/><path d="M36 475.5 H50" stroke="#111" stroke-width="1"/><path d="M45 479.5 H50" stroke="#111" stroke-width="1"/><path d="M45 483.5 H50" stroke="#111" stroke-width="1"/><path d="M45 487.5 H50" stroke="#111" stroke-width="1"/><path d="M45 491.5 H50" stroke="#111" stroke-width="1"/><path d="M45 495.5 H50" stroke="#111" stroke-width="1"/><path d="M45 499.5 H50" stroke="#111" stroke-width="1"/><path d="M45 503.5 H50" stroke="#111" stroke-width="1"/><path d="M45 507.5 H50" stroke="#111" stroke-width="1"/><path d="M45 511.5 H50" stroke="#111" stroke-width="1"/><path d="M36 515.5 H50" stroke="#111" stroke-width="1"/><path d="M45 519.5 H50" stroke="#111" stroke-width="1"/><path d="M45 523.5 H50" stroke="#111" stroke-width="1"/><path d="M45 527.5 H50" stroke="#111" stroke-width="1"/><path d="M45 530.5 H50" stroke="#111" stroke-width="1"/><path d="M45 534.5 H50" stroke="#111" stroke-width="1"/><path d="M45 538.5 H50" stroke="#111" stroke-width="1"/><path d="M45 542.5 H50" stroke="#111" stroke-width="1"/><path d="M45 546.5 H50" stroke="#111" stroke-width="1"/><path d="M45 550.5 H50" stroke="#111" stroke-width="1"/><path d="M36 554.5 H50" stroke="#111" stroke-width="1"/><path d="M45 558.5 H50" stroke="#111" stroke-width="1"/><path d="M45 562.5 H50" stroke="#111" stroke-width="1"/><path d="M45 566.5 H50" stroke="#111" stroke-width="1"/></svg>
<div class="a" style="left:33px;top:200px;width:6.12px;height:12px;font-size:11px;line-height:12px;color:#222;white-space:nowrap;transform-origin:0 0;transform:translate(0,6.12px) rotate(-90deg)">0</div>
<div class="a" style="left:33px;top:239px;width:12.24px;height:12px;font-size:11px;line-height:12px;color:#222;white-space:nowrap;transform-origin:0 0;transform:translate(0,12.24px) rotate(-90deg)">10</div>
<div class="a" style="left:33px;top:279px;width:12.24px;height:12px;font-size:11px;line-height:12px;color:#222;white-space:nowrap;transform-origin:0 0;transform:translate(0,12.24px) rotate(-90deg)">20</div>
<div class="a" style="left:33px;top:318px;width:12.24px;height:12px;font-size:11px;line-height:12px;color:#222;white-space:nowrap;transform-origin:0 0;transform:translate(0,12.24px) rotate(-90deg)">30</div>
<div class="a" style="left:33px;top:358px;width:12.24px;height:12px;font-size:11px;line-height:12px;color:#222;white-space:nowrap;transform-origin:0 0;transform:translate(0,12.24px) rotate(-90deg)">40</div>
<div class="a" style="left:33px;top:398px;width:12.24px;height:12px;font-size:11px;line-height:12px;color:#222;white-space:nowrap;transform-origin:0 0;transform:translate(0,12.24px) rotate(-90deg)">50</div>
<div class="a" style="left:33px;top:437px;width:12.24px;height:12px;font-size:11px;line-height:12px;color:#222;white-space:nowrap;transform-origin:0 0;transform:translate(0,12.24px) rotate(-90deg)">60</div>
<div class="a" style="left:33px;top:477px;width:12.24px;height:12px;font-size:11px;line-height:12px;color:#222;white-space:nowrap;transform-origin:0 0;transform:translate(0,12.24px) rotate(-90deg)">70</div>
<div class="a" style="left:33px;top:517px;width:12.24px;height:12px;font-size:11px;line-height:12px;color:#222;white-space:nowrap;transform-origin:0 0;transform:translate(0,12.24px) rotate(-90deg)">80</div>
<div class="a" style="left:33px;top:556px;width:12.24px;height:12px;font-size:11px;line-height:12px;color:#222;white-space:nowrap;transform-origin:0 0;transform:translate(0,12.24px) rotate(-90deg)">90</div>
<svg class="a" style="left:32px;top:497px" width="18" height="8" viewBox="0 0 18 8"><path d="M1 1.5 L6.5 4 L1 6.5 Z" fill="#e01818"/><path d="M5 4 H18" stroke="#e01818" stroke-width="1.2"/></svg>
<div style="position:absolute;left:50px;top:191px;width:72px;height:379px;background:#8f98ac"></div>
<div style="position:absolute;left:122px;top:191px;width:1px;height:379px;background:#e22a2a"></div>
<div style="position:absolute;left:123px;top:191px;width:1222px;height:379px;background:#fefefe"></div>
<div style="position:absolute;left:134px;top:197px;width:1211px;height:1px;background:#8c8c8c"></div>
<div style="position:absolute;left:134px;top:197px;width:1px;height:373px;background:#8c8c8c"></div>
<div style="position:absolute;left:967.5px;top:191px;width:1.5px;height:379px;background:#b02a2a"></div>
<svg class="a" style="left:1047px;top:277px" width="298" height="293" viewBox="0 0 298 293"><path d="M0.5 293 V0.5 H298" fill="none" stroke="#808080" stroke-width="1" stroke-dasharray="1 2"/></svg>
<div style="position:absolute;left:213px;top:276px;width:676px;height:294px;border:1px solid #8a8a8a;border-bottom:none"></div>
<div style="position:absolute;left:247px;top:277px;width:641px;height:15.100000000000023px;background:#0a78d7"></div>
<div style="position:absolute;left:214px;top:292.1px;width:500px;height:31.55px;background:#0a78d7"></div>
<div style="position:absolute;left:247px;top:323.65000000000003px;width:641px;height:31.55px;background:#0a78d7"></div>
<div style="position:absolute;left:214px;top:355.20000000000005px;width:674px;height:126.19999999999999px;background:#0a78d7"></div>
<div style="position:absolute;left:214px;top:481.40000000000003px;width:315px;height:31.55px;background:#0a78d7"></div>
<div class="a" style="left:247px;top:276.6px;height:16px;white-space:nowrap;font-family:'Liberation Serif',serif;font-size:16px;line-height:16px;color:#fff;letter-spacing:0.85px;letter-spacing:0.85px">童年是蓝色的，四季是多情的，我记忆中的童年时代也是七彩的，充满欢乐的。在这段</div>
<div class="a" style="left:214px;top:308.15000000000003px;height:16px;white-space:nowrap;font-family:'Liberation Serif',serif;font-size:16px;line-height:16px;color:#fff;letter-spacing:0.85px;letter-spacing:0.85px">美丽的时光中，有多少美丽的记忆曾经被珍藏起来。</div>
<div class="a" style="left:247px;top:339.70000000000005px;height:16px;white-space:nowrap;font-family:'Liberation Serif',serif;font-size:16px;line-height:16px;color:#fff;letter-spacing:0.85px;letter-spacing:0.85px">从曾经的懵懂孩童到现在，随着岁月的流逝，我们一起走过了一个又一个春秋冬夏的小</div>
<div class="a" style="left:214px;top:371.25px;height:16px;white-space:nowrap;font-family:'Liberation Serif',serif;font-size:16px;line-height:16px;color:#fff;letter-spacing:0.85px;letter-spacing:0.85px">学生，是全人类的未来和希望，人生下来首先要学会做人，无论你是黄种人还是不是黑种人</div>
<div class="a" style="left:214px;top:402.8px;height:16px;white-space:nowrap;font-family:'Liberation Serif',serif;font-size:16px;line-height:16px;color:#fff;letter-spacing:0.85px;letter-spacing:0.85px">或者白种人，首先是一个走向充满了幻想的孩提时代，穿开裆裤的日子里，由我们每一个人</div>
<div class="a" style="left:214px;top:434.35px;height:16px;white-space:nowrap;font-family:'Liberation Serif',serif;font-size:16px;line-height:16px;color:#fff;letter-spacing:0.85px;letter-spacing:0.85px">无法重复的记忆，流鼻涕的小学时代有我们无法重复的人生之始。我从小就爱好写作，现在</div>
<div class="a" style="left:214px;top:465.90000000000003px;height:16px;white-space:nowrap;font-family:'Liberation Serif',serif;font-size:16px;line-height:16px;color:#fff;letter-spacing:0.85px;letter-spacing:0.85px">已经是一名人民教师了，仍然在网上书写着我中英文双语的博客，在这里我看到文采飞扬的</div>
<div class="a" style="left:214px;top:497.45000000000005px;height:16px;white-space:nowrap;font-family:'Liberation Serif',serif;font-size:16px;line-height:16px;color:#fff;letter-spacing:0.85px;letter-spacing:0.85px">莘莘学子的个人作文集，倍感欣慰和激动！</div>
<div class="a" style="left:548px;top:284px;width:265px;height:121px;background:#e3ecf9;border:1px solid #f2f7fd"></div>
<div style="position:absolute;left:549px;top:285px;width:263px;height:30px;background:#fff"></div>
<div style="position:absolute;left:556.5px;top:291px;width:16px;height:16px;border-radius:50%;background:linear-gradient(#fbc70c 0%,#f8a808 45%,#f28400 75%,#ee6a00 100%);color:#fff;font-size:7px;line-height:16px;text-align:center;font-family:'Liberation Sans',sans-serif;letter-spacing:-0.4px;text-shadow:0 0 1px #a85a00">DPS</div>
<div style="position:absolute;left:578px;top:292px;white-space:nowrap;font-size:13px;line-height:15px;color:#111">行间距</div>
<svg class="a" style="left:791px;top:294px" width="12" height="12" viewBox="0 0 12 12"><path d="M1 1 L11 11 M11 1 L1 11" stroke="#222" stroke-width="1.2"/></svg>
<div class="a" style="left:572px;top:332px;width:135px;height:20px;background:#fbfcfe;border:1px solid #a8b6c8"></div>
<div style="position:absolute;left:575px;top:335px;white-space:nowrap;font-size:13px;line-height:15px;color:#111">固定行距</div>
<div class="dd" style="left:695px;top:340px;border-top-color:#444;border-left-width:3.5px;border-right-width:3.5px;border-top-width:4px"></div>
<div class="a" style="left:713px;top:332px;width:88px;height:20px;background:#fff;border:1px solid #a8b6c8"></div>
<div style="position:absolute;left:716.5px;top:335px;width:31px;height:14px;background:#1a5cc8"></div>
<div style="position:absolute;left:717px;top:335px;white-space:nowrap;font-family:'Liberation Mono',monospace;font-size:12px;line-height:14px;color:#fff;letter-spacing:-1px">22.43</div>
<div style="position:absolute;left:753px;top:335px;white-space:nowrap;font-family:'Liberation Serif',serif;font-weight:bold;font-size:13px;line-height:14px;color:#111;letter-spacing:1.5px">pt</div>
<div class="a" style="left:789px;top:335px;width:0;height:0;border-left:3px solid transparent;border-right:3px solid transparent;border-bottom:4px solid #2a3a60"></div>
<div class="a" style="left:789px;top:344px;width:0;height:0;border-left:3px solid transparent;border-right:3px solid transparent;border-top:4px solid #2a3a60"></div>
<div class="a" style="left:579px;top:365px;width:88px;height:21px;border-radius:3px;border:1px solid #3c94d8;box-shadow:inset 0 0 0 1px #9fd4f4;background:linear-gradient(#f4f4f4 0%,#e8e8e8 50%,#d8d8d8 51%,#cfcfcf 100%);font-size:13px;line-height:19px;text-align:center;color:#111">应用</div>
<div class="a" style="left:693px;top:365px;width:88px;height:21px;border-radius:3px;border:1px solid #707070;background:linear-gradient(#f4f4f4 0%,#ebebeb 50%,#dddddd 51%,#d0d0d0 100%);font-size:13px;line-height:19px;text-align:center;color:#111">关闭</div>
<div style="position:absolute;left:1345px;top:173px;width:18px;height:397px;background:linear-gradient(90deg,#e9e9e9,#f2f2f2);border-left:1px solid #e4e4e4;border-right:1px solid #d4d4d4"></div>
<div class="a" style="left:1349px;top:180px;width:0;height:0;border-left:5px solid transparent;border-right:5px solid transparent;border-bottom:5px solid #555"></div>
<div class="a" style="left:1347px;top:217px;width:14px;height:18px;border:1px solid #9a9a9a;border-radius:2px;background:linear-gradient(90deg,#f8f8f8,#e0e0e0)"></div>
<svg class="a" style="left:1350px;top:221px" width="8" height="10" viewBox="0 0 8 10"><path d="M0 1.5 H8 M0 3.5 H8 M0 5.5 H8 M0 7.5 H8" stroke="#555" stroke-width="1"/></svg>
<div class="a" style="left:1349px;top:560px;width:0;height:0;border-left:5px solid transparent;border-right:5px solid transparent;border-top:5px solid #555"></div>
<div style="position:absolute;left:32px;top:570px;width:1313px;height:14px;background:#ececec;border-top:1px solid #d8d8d8"></div>
<div class="a" style="left:39px;top:573px;width:0;height:0;border-top:5px solid transparent;border-bottom:5px solid transparent;border-right:5px solid #555"></div>
<div class="a" style="left:51px;top:572px;width:900px;height:14px;border:1px solid #a0a0a0;border-radius:2px;background:linear-gradient(#f6f6f6,#dcdcdc)"></div>
<svg class="a" style="left:497px;top:575px" width="8" height="8" viewBox="0 0 8 8"><path d="M1.5 0 V8 M3.5 0 V8 M5.5 0 V8" stroke="#555" stroke-width="1"/></svg>
<div class="a" style="left:1336px;top:573px;width:0;height:0;border-top:5px solid transparent;border-bottom:5px solid transparent;border-left:5px solid #555"></div>
<div style="position:absolute;left:1345px;top:570px;width:17px;height:14px;background:#98a0b4"></div>
<div class="a" style="left:1314px;top:579px;width:9px;height:9px;border-radius:50%;background:#c06a20"></div>
</body></html>
